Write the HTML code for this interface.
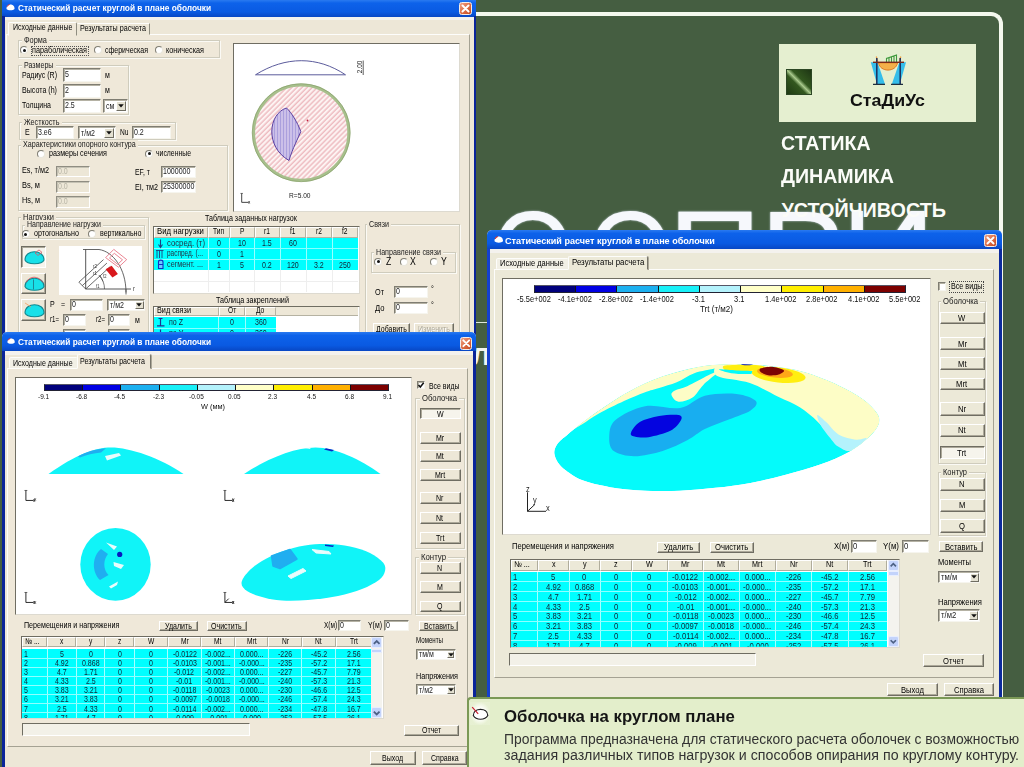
<!DOCTYPE html>
<html lang="ru"><head><meta charset="utf-8"><title>СтаДиУс</title>
<style>
html,body{margin:0;padding:0}
body{width:1024px;height:767px;overflow:hidden;background:#455e41;position:relative;font-family:"Liberation Sans",sans-serif;}
div{position:absolute;box-sizing:border-box}
svg{position:absolute;overflow:visible}
.t{position:absolute;white-space:nowrap;transform-origin:0 50%}
.win{overflow:hidden;background:var(--bg);--bg:#ece9d8;--pg:#ece9d8}
.ttl{background:linear-gradient(#2a7af0 0%,#0d62ea 18%,#0a5ae2 70%,#0847c4 100%)}
.btn{background:var(--bg);border:1px solid;border-color:#fff #6f6d62 #6f6d62 #fff;box-shadow:inset -1px -1px 0 #aca899}
.btnp{background:#f6f4ec;border:1px solid;border-color:#6f6d62 #fff #fff #6f6d62;box-shadow:inset 1px 1px 0 #aca899}
.inp{background:#fff;border:1px solid;border-color:#7f7d72 #f6f5ee #f6f5ee #7f7d72;box-shadow:inset 1px 1px 0 #b5b2a4}
.inpd{background:var(--bg);border:1px solid;border-color:#8f8d82 #fff #fff #8f8d82;box-shadow:inset 1px 1px 0 #c5c2b4}
.grp{border:1px solid #cfccbd;box-shadow:1px 1px 0 #fbfaf5, inset 1px 1px 0 #fbfaf5}
.page{background:var(--pg);border:1px solid;border-color:#fdfdfb #a5a293 #a5a293 #fdfdfb}
.cv{background:#fff;border:1px solid;border-color:#6f6d62 #dddad0 #dddad0 #6f6d62}

.rad{border-radius:50%;background:#fff;border:1px solid;border-color:#7f7d72 #e8e6dc #e8e6dc #7f7d72}
.cy{background:#00ffff}
</style></head>
<body>
<div style="left:440px;top:12px;width:563px;height:800px;border:4px solid #f4f8ee;border-left:none;border-bottom:none;border-top-right-radius:12px;"></div>
<div style="left:476px;top:321.5px;width:12px;height:1.5px;background:#dfe6da;"></div>
<span class="t" style="left:492.27px;top:182.43px;font-size:119px;line-height:142.8px;color:#f6f8fc;transform:scaleX(0.883);text-shadow:0 0 2px #d4deec;">О</span>
<span class="t" style="left:587.61px;top:182.43px;font-size:119px;line-height:142.8px;color:#f6f8fc;transform:scaleX(0.914);text-shadow:0 0 2px #d4deec;">О</span>
<span class="t" style="left:667.57px;top:181.43px;font-size:119px;line-height:142.8px;color:#f6f8fc;transform:scaleX(1.095);text-shadow:0 0 2px #d4deec;">П</span>
<span class="t" style="left:759.83px;top:182.43px;font-size:119px;line-height:142.8px;color:#f6f8fc;transform:scaleX(1.068);text-shadow:0 0 2px #d4deec;">Р</span>
<span class="t" style="left:840.98px;top:181.43px;font-size:119px;line-height:142.8px;color:#f6f8fc;transform:scaleX(1.105);text-shadow:0 0 2px #d4deec;">И</span>
<span class="t" style="left:472.6px;top:342.68px;font-size:23.5px;line-height:28.2px;color:#f2f5ee;font-weight:bold;">Л</span>
<div style="left:779px;top:43.5px;width:197px;height:78.5px;background:#e5efd0;"></div>
<div style="left:786px;top:69px;width:25.5px;height:25.5px;background:linear-gradient(45deg,#1f3a13 0%,#33581f 40%,#a9c98c 50%,#33581f 60%,#1e3614 100%);border:1px solid #2c4724;"></div>
<svg style="left:868px;top:52px" width="42" height="36" viewBox="868 52 42 36">
<path d="M870.8 62.3 L877.5 62.3 L885 84.3 L877 84.3 Z" fill="#35bdea"/>
<path d="M906 62.3 L899.3 62.3 L891.8 84.3 L899.8 84.3 Z" fill="#35bdea"/>
<path d="M878.5 62.8 C880 72.5 896 72.5 897.5 62.8 Z" fill="#f3b04a" stroke="#e07a20" stroke-width="1"/>
<path d="M886.5 62 L886.5 58.5 L896.5 55 L896.5 62 M889 62 L889 57.8 M891.5 62 L891.5 57 M894 62 L894 56" stroke="#3f9a3c" stroke-width="1.1" fill="none"/>
<path d="M876.3 56.5 L877.8 62 M900.8 56.5 L899.3 62" stroke="#f0a040" stroke-width="1.3"/>
<path d="M876.8 58 L876.8 84.3 M900.2 58 L900.2 84.3" stroke="#1c2f5c" stroke-width="1.5"/>
<path d="M873 62.3 L904 62.3" stroke="#7a2a1a" stroke-width="1.4"/>
<path d="M873 84.3 L885 84.3 M891 84.3 L903 84.3" stroke="#1f2f3f" stroke-width="1.2"/>
</svg>
<span class="t" style="left:850px;top:91.82px;font-size:15.8px;line-height:18.96px;color:#111;font-weight:bold;transform:scaleX(1.127);">СтаДиУс</span>
<span class="t" style="left:781.4px;top:131.81px;font-size:19.8px;line-height:23.76px;color:#fbfcf8;font-weight:bold;transform:scaleX(0.988);">СТАТИКА</span>
<span class="t" style="left:781.4px;top:165.11px;font-size:19.8px;line-height:23.76px;color:#fbfcf8;font-weight:bold;transform:scaleX(0.991);">ДИНАМИКА</span>
<span class="t" style="left:781.4px;top:198.81px;font-size:19.8px;line-height:23.76px;color:#fbfcf8;font-weight:bold;">УСТОЙЧИВОСТЬ</span>
<div class="win" style="left:2px;top:0px;width:474px;height:340px;--bg:#ede7d7;--pg:#efe8d9;filter:blur(0.55px);">
<div class="ttl" style="left:0px;top:0px;width:474px;height:16.5px;"></div>
<svg style="left:4px;top:4px" width="9" height="7.2" viewBox="0 0 10 8"><path d="M0.5 5.5 C0.5 1.5 3 0.5 5 0.5 C7 0.5 9.5 1.5 9.5 5.5 C8 7.5 2 7.5 0.5 5.5 Z" fill="#fff"/><path d="M1.2 3 C1.8 1.6 2.8 0.9 4 0.6" stroke="#d02020" stroke-width="1.1" fill="none"/></svg>
<span class="t" style="left:16px;top:2.9px;font-size:9px;line-height:10.8px;color:#fff;font-weight:bold;transform:scaleX(0.926);">Статический расчет круглой в плане оболочки</span>
<div style="left:457px;top:1.5px;width:13px;height:13px;background:linear-gradient(135deg,#eea388,#dc6a42 55%,#c24a22);border:1px solid #f6ece6;border-radius:2.5px;"></div>
<svg style="left:457px;top:1.5px" width="13" height="13" viewBox="0 0 12 12"><path d="M3.2 3.2 L8.8 8.8 M8.8 3.2 L3.2 8.8" stroke="#fff" stroke-width="1.8" stroke-linecap="round"/></svg>
<div style="left:0px;top:16px;width:2.5px;height:330px;background:#0a249a;"></div>
<div style="left:471.5px;top:16px;width:2.5px;height:330px;background:#0a249a;"></div>
<div style="left:2.5px;top:16.5px;width:469px;height:3.5px;background:#f4f2ee;"></div>
<div class="page" style="left:4px;top:34px;width:463.5px;height:320px;"></div>
<div style="left:6px;top:21.5px;width:69px;height:14px;background:var(--pg);border:1px solid;border-color:#fdfdfb #8f8d80 var(--pg) #fdfdfb;border-radius:2px 2px 0 0;"></div>
<div style="left:75px;top:23px;width:73px;height:11.5px;background:var(--bg);border:1px solid;border-color:#fdfdfb #8f8d80 transparent transparent;"></div>
<span class="t" style="left:11px;top:22.38px;font-size:8.7px;line-height:10.44px;color:#000;transform:scaleX(0.809);">Исходные данные</span>
<span class="t" style="left:78px;top:22.98px;font-size:8.7px;line-height:10.44px;color:#000;transform:scaleX(0.825);">Результаты расчета</span>
<div class="grp" style="left:16px;top:40px;width:202px;height:18px;"></div>
<div style="left:20px;top:35px;width:27px;height:10px;background:var(--pg);"></div>
<span class="t" style="left:22px;top:34.78px;font-size:8.7px;line-height:10.44px;color:#1a1a1a;transform:scaleX(0.848);">Форма</span>
<div class="rad" style="left:18px;top:46px;width:8px;height:8px;"></div>
<div style="left:20.5px;top:48.5px;width:3px;height:3px;background:#111;border-radius:50%;"></div>
<div style="left:28.5px;top:45.5px;width:58px;height:10.5px;border:1px dotted #555;"></div>
<span class="t" style="left:30px;top:45.38px;font-size:8.7px;line-height:10.44px;color:#000;transform:scaleX(0.833);">параболическая</span>
<div class="rad" style="left:91.5px;top:46px;width:8px;height:8px;"></div>
<span class="t" style="left:103px;top:45.38px;font-size:8.7px;line-height:10.44px;color:#000;transform:scaleX(0.807);">сферическая</span>
<div class="rad" style="left:152.5px;top:46px;width:8px;height:8px;"></div>
<span class="t" style="left:164px;top:45.38px;font-size:8.7px;line-height:10.44px;color:#000;transform:scaleX(0.832);">коническая</span>
<div class="grp" style="left:16px;top:65px;width:111px;height:50px;"></div>
<div style="left:20px;top:60px;width:33.5px;height:10px;background:var(--pg);"></div>
<span class="t" style="left:22px;top:59.78px;font-size:8.7px;line-height:10.44px;color:#1a1a1a;transform:scaleX(0.816);">Размеры</span>
<span class="t" style="left:20px;top:69.78px;font-size:8.7px;line-height:10.44px;color:#000;transform:scaleX(0.807);">Радиус (R)</span>
<div class="inp" style="left:61px;top:68px;width:38px;height:14px;"></div>
<span class="t" style="left:63px;top:69.48px;font-size:8.7px;line-height:10.44px;color:#222;transform:scaleX(0.810);">5</span>
<span class="t" style="left:103px;top:70.28px;font-size:8.7px;line-height:10.44px;color:#000;transform:scaleX(0.810);">м</span>
<span class="t" style="left:20px;top:84.78px;font-size:8.7px;line-height:10.44px;color:#000;transform:scaleX(0.815);">Высота (h)</span>
<div class="inp" style="left:61px;top:84px;width:38px;height:14px;"></div>
<span class="t" style="left:63px;top:85.48px;font-size:8.7px;line-height:10.44px;color:#222;transform:scaleX(0.810);">2</span>
<span class="t" style="left:103px;top:85.28px;font-size:8.7px;line-height:10.44px;color:#000;transform:scaleX(0.810);">м</span>
<span class="t" style="left:20px;top:99.78px;font-size:8.7px;line-height:10.44px;color:#000;transform:scaleX(0.805);">Толщина</span>
<div class="inp" style="left:61px;top:99px;width:38px;height:13.5px;"></div>
<span class="t" style="left:63px;top:100.23px;font-size:8.7px;line-height:10.44px;color:#222;transform:scaleX(0.810);">2.5</span>
<div class="inp" style="left:101px;top:99px;width:24.5px;height:13.5px;"></div>
<span class="t" style="left:104px;top:100.83px;font-size:8.7px;line-height:10.44px;color:#222;transform:scaleX(0.810);">см</span>
<div style="left:113.5px;top:100.5px;width:10.5px;height:10.5px;background:#e4e1d2;border:1px solid;border-color:#fff #6f6d62 #6f6d62 #fff;"></div>
<svg style="left:114.75px;top:103.15px" width="8" height="6" viewBox="0 0 8 6"><path d="M1.2 1.3 L6.8 1.3 L4 4.6 Z" fill="#111"/></svg>
<div class="grp" style="left:17px;top:122px;width:157px;height:18px;"></div>
<div style="left:20px;top:117px;width:39.5px;height:10px;background:var(--pg);"></div>
<span class="t" style="left:22px;top:116.78px;font-size:8.7px;line-height:10.44px;color:#1a1a1a;transform:scaleX(0.831);">Жесткость</span>
<span class="t" style="left:23px;top:127.28px;font-size:8.7px;line-height:10.44px;color:#000;transform:scaleX(0.810);">E</span>
<div class="inp" style="left:34px;top:126px;width:38px;height:13px;"></div>
<span class="t" style="left:36px;top:126.98px;font-size:8.7px;line-height:10.44px;color:#222;transform:scaleX(0.810);">3.e6</span>
<div class="inp" style="left:76px;top:126px;width:37.5px;height:13px;"></div>
<span class="t" style="left:79px;top:127.58px;font-size:8.7px;line-height:10.44px;color:#222;transform:scaleX(0.810);">т/м2</span>
<div style="left:102px;top:127.5px;width:10px;height:10px;background:#e4e1d2;border:1px solid;border-color:#fff #6f6d62 #6f6d62 #fff;"></div>
<svg style="left:103px;top:129.9px" width="8" height="6" viewBox="0 0 8 6"><path d="M1.2 1.3 L6.8 1.3 L4 4.6 Z" fill="#111"/></svg>
<span class="t" style="left:118px;top:127.28px;font-size:8.7px;line-height:10.44px;color:#000;transform:scaleX(0.764);">Nu</span>
<div class="inp" style="left:130px;top:126px;width:39px;height:13px;"></div>
<span class="t" style="left:132px;top:126.98px;font-size:8.7px;line-height:10.44px;color:#222;transform:scaleX(0.810);">0.2</span>
<div class="grp" style="left:15.5px;top:144.5px;width:210px;height:66.5px;"></div>
<div style="left:19px;top:139.5px;width:117px;height:10px;background:var(--pg);"></div>
<span class="t" style="left:21px;top:139.28px;font-size:8.7px;line-height:10.44px;color:#1a1a1a;transform:scaleX(0.821);">Характеристики опорного контура</span>
<div class="rad" style="left:35px;top:149.5px;width:8px;height:8px;"></div>
<span class="t" style="left:47px;top:147.78px;font-size:8.7px;line-height:10.44px;color:#000;transform:scaleX(0.822);">размеры сечения</span>
<div class="rad" style="left:143px;top:149.5px;width:8px;height:8px;"></div>
<div style="left:145.5px;top:152px;width:3px;height:3px;background:#111;border-radius:50%;"></div>
<span class="t" style="left:154px;top:147.78px;font-size:8.7px;line-height:10.44px;color:#000;transform:scaleX(0.789);">численные</span>
<span class="t" style="left:20px;top:164.78px;font-size:8.7px;line-height:10.44px;color:#000;transform:scaleX(0.838);">Es, т/м2</span>
<div class="inpd" style="left:54px;top:165.5px;width:34px;height:11.5px;"></div>
<span class="t" style="left:56px;top:165.73px;font-size:8.7px;line-height:10.44px;color:#b8b5a6;transform:scaleX(0.810);">0.0</span>
<span class="t" style="left:20px;top:179.78px;font-size:8.7px;line-height:10.44px;color:#000;transform:scaleX(0.858);">Bs, м</span>
<div class="inpd" style="left:54px;top:180.5px;width:34px;height:12px;"></div>
<span class="t" style="left:56px;top:180.98px;font-size:8.7px;line-height:10.44px;color:#b8b5a6;transform:scaleX(0.810);">0.0</span>
<span class="t" style="left:20px;top:194.78px;font-size:8.7px;line-height:10.44px;color:#000;transform:scaleX(0.839);">Hs, м</span>
<div class="inpd" style="left:54px;top:196px;width:34px;height:12px;"></div>
<span class="t" style="left:56px;top:196.48px;font-size:8.7px;line-height:10.44px;color:#b8b5a6;transform:scaleX(0.810);">0.0</span>
<span class="t" style="left:133px;top:166.78px;font-size:8.7px;line-height:10.44px;color:#000;transform:scaleX(0.791);">EF, т</span>
<div class="inp" style="left:159px;top:166px;width:35px;height:11.5px;"></div>
<span class="t" style="left:161px;top:166.23px;font-size:8.7px;line-height:10.44px;color:#222;transform:scaleX(0.810);">1000000</span>
<span class="t" style="left:133px;top:181.78px;font-size:8.7px;line-height:10.44px;color:#000;transform:scaleX(0.826);">EI, тм2</span>
<div class="inp" style="left:159px;top:181px;width:35px;height:11.5px;"></div>
<span class="t" style="left:161px;top:181.23px;font-size:8.7px;line-height:10.44px;color:#222;transform:scaleX(0.810);">25300000</span>
<div class="cv" style="left:230.5px;top:42.5px;width:227.5px;height:169px;"></div>
<svg style="left:230.5px;top:42.5px" width="227" height="169" viewBox="232.5 42.5 227 169">
<defs>
<pattern id="hp" width="3.6" height="3.6" patternUnits="userSpaceOnUse" patternTransform="rotate(-45)"><rect width="3.6" height="3.6" fill="#fdf3f2"/><line x1="0" y1="1" x2="3.6" y2="1" stroke="#e59aa2" stroke-width="0.9"/></pattern>
<pattern id="vp" width="3" height="3" patternUnits="userSpaceOnUse"><rect width="3" height="3" fill="#ece0f4"/><line x1="1" y1="0" x2="1" y2="3" stroke="#5a4fc0" stroke-width="0.9"/></pattern>
</defs>
<path d="M255 74.3 C285 55.5 317 55.5 345 74.3 Z" fill="none" stroke="#5c5c9c" stroke-width="1"/>
<path d="M362.7 60 L362.7 74.5" stroke="#333" stroke-width="0.8"/>
<circle cx="300.7" cy="132.2" r="47.6" fill="url(#hp)" stroke="#a7bf8c" stroke-width="3"/>
<circle cx="300.7" cy="132.2" r="49" fill="none" stroke="#7f9a62" stroke-width="0.6"/>
<path d="M286 107.5 C268 113 264 146 288.5 160 C292 148 298 137 300.3 131 C297 122 291 112 286 107.5 Z" fill="url(#vp)" stroke="#5a3fa0" stroke-width="1"/>
<circle cx="307" cy="120" r="0.9" fill="#c02040"/>
</svg>
<span class="t" style="left:357.5px;top:63.4px;font-size:6.5px;line-height:7.8px;color:#222;transform:scaleX(0.810);transform-origin:50% 50%;transform:translate(-50%,0) rotate(-90deg);">2.00</span>
<span class="t" style="left:287px;top:192.1px;font-size:6.5px;line-height:7.8px;color:#222;transform:scaleX(1.017);">R=5.00</span>
<svg style="left:238px;top:193px" width="10.2" height="11.05" viewBox="0 0 12 13"><path d="M2 0.5 L2 11 L10 11 " stroke="#222" stroke-width="1" fill="none"/><path d="M0.5 0.5 L3.5 0.5 M10 9.5 L11.5 12.5 M11.5 9.5 L10 12.5" stroke="#222" stroke-width="0.7" fill="none"/></svg>
<div class="grp" style="left:15.5px;top:217px;width:131.5px;height:128px;"></div>
<div style="left:19px;top:212px;width:35px;height:10px;background:var(--pg);"></div>
<span class="t" style="left:21px;top:211.78px;font-size:8.7px;line-height:10.44px;color:#1a1a1a;transform:scaleX(0.860);">Нагрузки</span>
<div class="grp" style="left:20px;top:224.5px;width:123px;height:14.5px;"></div>
<div style="left:23px;top:219.5px;width:78px;height:10px;background:var(--pg);"></div>
<span class="t" style="left:25px;top:219.28px;font-size:8.7px;line-height:10.44px;color:#1a1a1a;transform:scaleX(0.810);">Направление нагрузки</span>
<div class="rad" style="left:19.5px;top:230px;width:8px;height:8px;"></div>
<div style="left:22px;top:232.5px;width:3px;height:3px;background:#111;border-radius:50%;"></div>
<span class="t" style="left:32px;top:228.28px;font-size:8.7px;line-height:10.44px;color:#000;transform:scaleX(0.819);">ортогонально</span>
<div class="rad" style="left:85.5px;top:230px;width:8px;height:8px;"></div>
<span class="t" style="left:97.5px;top:228.28px;font-size:8.7px;line-height:10.44px;color:#000;transform:scaleX(0.815);">вертикально</span>
<div class="btnp" style="left:19px;top:246px;width:24.5px;height:21.5px;"></div>
<svg style="left:0;top:0" width="160" height="340" viewBox="2 0 160 340"><path d="M25 259.95 C25 248.95 44 248.95 44 259.95 C42 264.95 27 264.95 25 259.95 Z" fill="#18e0e8" stroke="#108890" stroke-width="1.1"/><path d="M35 252.95 l4 -3 l3 2.5 l-4 3 z" fill="none" stroke="#e05060" stroke-width="0.8"/></svg>
<div class="btn" style="left:19px;top:272.5px;width:24.5px;height:21.5px;"></div>
<svg style="left:0;top:0" width="160" height="340" viewBox="2 0 160 340"><path d="M25 286.45 C25 275.45 44 275.45 44 286.45 C42 291.45 27 291.45 25 286.45 Z" fill="#18e0e8" stroke="#108890" stroke-width="1.1"/><path d="M26 282.45 C30 275.45 38 275.45 43 282.45" fill="none" stroke="#e05060" stroke-width="0.8"/><path d="M33.5 279.45 L33.5 289.45" stroke="#207080" stroke-width="0.8"/></svg>
<div class="btn" style="left:19px;top:299px;width:24.5px;height:21.5px;"></div>
<svg style="left:0;top:0" width="160" height="340" viewBox="2 0 160 340"><path d="M25 312.95 C25 301.95 44 301.95 44 312.95 C42 317.95 27 317.95 25 312.95 Z" fill="#18e0e8" stroke="#108890" stroke-width="1.1"/><path d="M25 302.95 l6 4" stroke="#f0a060" stroke-width="0.8"/></svg>
<div style="left:57px;top:245.5px;width:83px;height:49px;background:#fff;"></div>
<svg style="left:57px;top:245.5px" width="83" height="49" viewBox="59 245.5 83 49">
<path d="M83 249 L99 249 C113 251 126 268 126 292" fill="none" stroke="#555" stroke-width="0.9"/>
<path d="M85.7 249 L85.7 288.5 L131 288.5" fill="none" stroke="#444" stroke-width="0.9"/>
<path d="M85.7 288.5 L110.3 266 M82.3 285.1 L106.9 262.6 M78.9 281.7 L103.5 259.1 M78.9 281.7 L85.7 288.5" fill="none" stroke="#444" stroke-width="0.8"/>
<path d="M105.6 268.7 L111.7 265.3 L117.9 273.5 L112.4 276.9 Z" fill="#d8181c"/>
<path d="M105.6 257.1 L113.8 248.9 L126.7 259.1 L118.5 266.7 Z M109.5 257.5 L114.3 252.8 L122.5 259.3 L117.7 263.8 Z" fill="none" stroke="#e87888" stroke-width="0.9"/>
<path d="M126 288.5 L126 294" stroke="#555" stroke-width="0.9"/>
<path d="M99.5 274.5 A19 19 0 0 1 103 281" fill="none" stroke="#444" stroke-width="0.7"/>
<path d="M104.5 288.5 A19 19 0 0 0 99 275" fill="none" stroke="#444" stroke-width="0.7"/>
</svg>
<span class="t" style="left:130.5px;top:285.3px;font-size:7px;line-height:8.4px;color:#333;transform:scaleX(0.810);">r</span>
<span class="t" style="left:90.5px;top:262.7px;font-size:5.5px;line-height:6.6px;color:#333;transform:scaleX(0.810);">r2</span>
<span class="t" style="left:90.5px;top:270.2px;font-size:5.5px;line-height:6.6px;color:#333;transform:scaleX(0.810);">r1</span>
<span class="t" style="left:94px;top:283.3px;font-size:5px;line-height:6px;color:#333;transform:scaleX(0.810);">f1</span>
<span class="t" style="left:101px;top:273px;font-size:5px;line-height:6px;color:#333;transform:scaleX(0.810);">f2</span>
<span class="t" style="left:48px;top:298.78px;font-size:8.7px;line-height:10.44px;color:#000;transform:scaleX(0.810);">P</span>
<span class="t" style="left:59px;top:298.78px;font-size:8.7px;line-height:10.44px;color:#000;transform:scaleX(0.810);">=</span>
<div class="inp" style="left:68px;top:299px;width:32.5px;height:11.5px;"></div>
<span class="t" style="left:70px;top:299.23px;font-size:8.7px;line-height:10.44px;color:#222;transform:scaleX(0.810);">0</span>
<div class="inp" style="left:105px;top:299px;width:38px;height:11.5px;"></div>
<span class="t" style="left:108px;top:299.83px;font-size:8.7px;line-height:10.44px;color:#222;transform:scaleX(0.810);">т/м2</span>
<div style="left:133px;top:300.5px;width:8.5px;height:8.5px;background:#e4e1d2;border:1px solid;border-color:#fff #6f6d62 #6f6d62 #fff;"></div>
<svg style="left:133.25px;top:302.15px" width="8" height="6" viewBox="0 0 8 6"><path d="M1.2 1.3 L6.8 1.3 L4 4.6 Z" fill="#111"/></svg>
<span class="t" style="left:48px;top:314.28px;font-size:8.7px;line-height:10.44px;color:#000;transform:scaleX(0.702);">r1=</span>
<div class="inp" style="left:60.5px;top:314px;width:23.5px;height:11.5px;"></div>
<span class="t" style="left:62.5px;top:314.23px;font-size:8.7px;line-height:10.44px;color:#222;transform:scaleX(0.810);">0</span>
<span class="t" style="left:94px;top:314.28px;font-size:8.7px;line-height:10.44px;color:#000;transform:scaleX(0.702);">r2=</span>
<div class="inp" style="left:106px;top:314px;width:22px;height:11.5px;"></div>
<span class="t" style="left:108px;top:314.23px;font-size:8.7px;line-height:10.44px;color:#222;transform:scaleX(0.810);">0</span>
<span class="t" style="left:133px;top:314.78px;font-size:8.7px;line-height:10.44px;color:#000;transform:scaleX(0.810);">м</span>
<div class="inp" style="left:60.5px;top:329px;width:23.5px;height:12px;"></div>
<div class="inp" style="left:106px;top:329px;width:22px;height:12px;"></div>
<span class="t" style="left:203px;top:212.78px;font-size:8.7px;line-height:10.44px;color:#000;transform:scaleX(0.819);">Таблица заданных нагрузок</span>
<div class="cv" style="left:150.5px;top:226px;width:207px;height:67.5px;"></div>
<div style="left:151.5px;top:227px;width:54.5px;height:10.5px;background:var(--bg);border:1px solid;border-color:#fff #b5b2a2 #b5b2a2 #fff;"></div>
<span class="t" style="left:154.5px;top:227.38px;font-size:8.2px;line-height:9.84px;color:#000;transform:scaleX(0.946);">Вид нагрузки</span>
<div style="left:206px;top:227px;width:21.5px;height:10.5px;background:var(--bg);border:1px solid;border-color:#fff #b5b2a2 #b5b2a2 #fff;"></div>
<span class="t" style="left:211.21px;top:227.38px;font-size:8.2px;line-height:9.84px;color:#000;transform:scaleX(0.810);">Тип</span>
<div style="left:227.5px;top:227px;width:25px;height:10.5px;background:var(--bg);border:1px solid;border-color:#fff #b5b2a2 #b5b2a2 #fff;"></div>
<span class="t" style="left:237.78px;top:227.38px;font-size:8.2px;line-height:9.84px;color:#000;transform:scaleX(0.810);">P</span>
<div style="left:252.5px;top:227px;width:25.5px;height:10.5px;background:var(--bg);border:1px solid;border-color:#fff #b5b2a2 #b5b2a2 #fff;"></div>
<span class="t" style="left:262.3px;top:227.38px;font-size:8.2px;line-height:9.84px;color:#000;transform:scaleX(0.810);">r1</span>
<div style="left:278px;top:227px;width:26px;height:10.5px;background:var(--bg);border:1px solid;border-color:#fff #b5b2a2 #b5b2a2 #fff;"></div>
<span class="t" style="left:288.23px;top:227.38px;font-size:8.2px;line-height:9.84px;color:#000;transform:scaleX(0.810);">f1</span>
<div style="left:304px;top:227px;width:26px;height:10.5px;background:var(--bg);border:1px solid;border-color:#fff #b5b2a2 #b5b2a2 #fff;"></div>
<span class="t" style="left:314.05px;top:227.38px;font-size:8.2px;line-height:9.84px;color:#000;transform:scaleX(0.810);">r2</span>
<div style="left:330px;top:227px;width:25.5px;height:10.5px;background:var(--bg);border:1px solid;border-color:#fff #b5b2a2 #b5b2a2 #fff;"></div>
<span class="t" style="left:339.98px;top:227.38px;font-size:8.2px;line-height:9.84px;color:#000;transform:scaleX(0.810);">f2</span>
<div style="left:151.5px;top:238px;width:204px;height:32.3px;background:#00ffff;"></div>
<div style="left:205.5px;top:238px;width:1px;height:32.3px;background:#9ff;"></div>
<div style="left:205.5px;top:270.3px;width:1px;height:22.2px;background:#eee;"></div>
<div style="left:227px;top:238px;width:1px;height:32.3px;background:#9ff;"></div>
<div style="left:227px;top:270.3px;width:1px;height:22.2px;background:#eee;"></div>
<div style="left:252px;top:238px;width:1px;height:32.3px;background:#9ff;"></div>
<div style="left:252px;top:270.3px;width:1px;height:22.2px;background:#eee;"></div>
<div style="left:277.5px;top:238px;width:1px;height:32.3px;background:#9ff;"></div>
<div style="left:277.5px;top:270.3px;width:1px;height:22.2px;background:#eee;"></div>
<div style="left:303.5px;top:238px;width:1px;height:32.3px;background:#9ff;"></div>
<div style="left:303.5px;top:270.3px;width:1px;height:22.2px;background:#eee;"></div>
<div style="left:329.5px;top:238px;width:1px;height:32.3px;background:#9ff;"></div>
<div style="left:329.5px;top:270.3px;width:1px;height:22.2px;background:#eee;"></div>
<div style="left:151.5px;top:248.3px;width:204px;height:0.8px;background:#8ff;"></div>
<div style="left:151.5px;top:259.1px;width:204px;height:0.8px;background:#8ff;"></div>
<div style="left:151.5px;top:281px;width:204px;height:0.8px;background:#eee;"></div>
<span class="t" style="left:165px;top:238.68px;font-size:8.2px;line-height:9.84px;color:#234;transform:scaleX(0.942);">сосред. (т)</span>
<span class="t" style="left:214.79px;top:238.38px;font-size:8.7px;line-height:10.44px;color:#123;transform:scaleX(0.810);">0</span>
<span class="t" style="left:236.08px;top:238.38px;font-size:8.7px;line-height:10.44px;color:#123;transform:scaleX(0.810);">10</span>
<span class="t" style="left:260.35px;top:238.38px;font-size:8.7px;line-height:10.44px;color:#123;transform:scaleX(0.810);">1.5</span>
<span class="t" style="left:287.08px;top:238.38px;font-size:8.7px;line-height:10.44px;color:#123;transform:scaleX(0.810);">60</span>
<span class="t" style="left:165px;top:249.38px;font-size:8.2px;line-height:9.84px;color:#234;transform:scaleX(0.791);">распред. (...</span>
<span class="t" style="left:214.79px;top:249.08px;font-size:8.7px;line-height:10.44px;color:#123;transform:scaleX(0.810);">0</span>
<span class="t" style="left:238.04px;top:249.08px;font-size:8.7px;line-height:10.44px;color:#123;transform:scaleX(0.810);">1</span>
<span class="t" style="left:165px;top:260.08px;font-size:8.2px;line-height:9.84px;color:#234;transform:scaleX(0.886);">сегмент. ...</span>
<span class="t" style="left:214.79px;top:259.78px;font-size:8.7px;line-height:10.44px;color:#123;transform:scaleX(0.810);">1</span>
<span class="t" style="left:238.04px;top:259.78px;font-size:8.7px;line-height:10.44px;color:#123;transform:scaleX(0.810);">5</span>
<span class="t" style="left:260.35px;top:259.78px;font-size:8.7px;line-height:10.44px;color:#123;transform:scaleX(0.810);">0.2</span>
<span class="t" style="left:285.12px;top:259.78px;font-size:8.7px;line-height:10.44px;color:#123;transform:scaleX(0.810);">120</span>
<span class="t" style="left:312.1px;top:259.78px;font-size:8.7px;line-height:10.44px;color:#123;transform:scaleX(0.810);">3.2</span>
<span class="t" style="left:336.87px;top:259.78px;font-size:8.7px;line-height:10.44px;color:#123;transform:scaleX(0.810);">250</span>
<svg style="left:0;top:0" width="400" height="340" viewBox="2 0 400 340"><path d="M160.5 239.5 L160.5 247 M158.5 244.5 L160.5 247.5 L162.5 244.5" stroke="#204080" stroke-width="1.1" fill="none"/><path d="M157 250.5 L157 258 M159.5 250.5 L159.5 258 M162 250.5 L162 258 M156 250.5 L163.5 250.5" stroke="#204080" stroke-width="0.9" fill="none"/><path d="M158.5 262 C158.5 259.5 163 259.5 163 262 L163 268.5 L158.5 268.5 Z M158.5 264.5 L163 264.5" stroke="#1030c0" stroke-width="1.1" fill="#6cf"/></svg>
<span class="t" style="left:214px;top:294.78px;font-size:8.7px;line-height:10.44px;color:#000;transform:scaleX(0.830);">Таблица закреплений</span>
<div class="cv" style="left:150.5px;top:305.5px;width:207px;height:40px;"></div>
<div style="left:151.5px;top:306.5px;width:65px;height:9.5px;background:var(--bg);border:1px solid;border-color:#fff #b5b2a2 #b5b2a2 #fff;"></div>
<span class="t" style="left:154.5px;top:306.38px;font-size:8.2px;line-height:9.84px;color:#000;transform:scaleX(0.889);">Вид связи</span>
<div style="left:216.5px;top:306.5px;width:26.5px;height:9.5px;background:var(--bg);border:1px solid;border-color:#fff #b5b2a2 #b5b2a2 #fff;"></div>
<span class="t" style="left:225.65px;top:306.38px;font-size:8.2px;line-height:9.84px;color:#000;transform:scaleX(0.810);">От</span>
<div style="left:243px;top:306.5px;width:31px;height:9.5px;background:var(--bg);border:1px solid;border-color:#fff #b5b2a2 #b5b2a2 #fff;"></div>
<span class="t" style="left:254.37px;top:306.38px;font-size:8.2px;line-height:9.84px;color:#000;transform:scaleX(0.810);">До</span>
<div style="left:274px;top:306.5px;width:82px;height:9.5px;background:var(--bg);border-bottom:1px solid #b5b2a2;"></div>
<div style="left:151.5px;top:316.5px;width:122.5px;height:30px;background:#00ffff;"></div>
<div style="left:216px;top:316.5px;width:1px;height:30px;background:#9ff;"></div>
<div style="left:242.5px;top:316.5px;width:1px;height:30px;background:#9ff;"></div>
<div style="left:151.5px;top:328px;width:122.5px;height:0.8px;background:#8ff;"></div>
<span class="t" style="left:167px;top:317.48px;font-size:8.7px;line-height:10.44px;color:#123;transform:scaleX(0.810);">по Z</span>
<span class="t" style="left:227.74px;top:317.48px;font-size:8.7px;line-height:10.44px;color:#123;transform:scaleX(0.810);">0</span>
<span class="t" style="left:252.62px;top:317.48px;font-size:8.7px;line-height:10.44px;color:#123;transform:scaleX(0.810);">360</span>
<span class="t" style="left:167px;top:328.28px;font-size:8.7px;line-height:10.44px;color:#123;transform:scaleX(0.810);">по Y</span>
<span class="t" style="left:227.74px;top:328.28px;font-size:8.7px;line-height:10.44px;color:#123;transform:scaleX(0.810);">0</span>
<span class="t" style="left:252.62px;top:328.28px;font-size:8.7px;line-height:10.44px;color:#123;transform:scaleX(0.810);">360</span>
<svg style="left:0;top:0" width="400" height="340" viewBox="2 0 400 340"><path d="M160.5 318 L160.5 325.5 M157 325.8 L164.5 325.8 M158.5 318.5 L162.5 318.5" stroke="#203090" stroke-width="1.2" fill="none"/><path d="M160.5 329.5 L160.5 337" stroke="#203090" stroke-width="1.2" fill="none"/></svg>
<div class="grp" style="left:362.5px;top:224px;width:95.5px;height:121px;"></div>
<div style="left:365px;top:219px;width:24px;height:10px;background:var(--pg);"></div>
<span class="t" style="left:367px;top:218.78px;font-size:8.7px;line-height:10.44px;color:#1a1a1a;transform:scaleX(0.821);">Связи</span>
<div class="grp" style="left:369px;top:252px;width:84.5px;height:20.5px;"></div>
<div style="left:372px;top:247px;width:69px;height:10px;background:var(--pg);"></div>
<span class="t" style="left:374px;top:246.78px;font-size:8.7px;line-height:10.44px;color:#1a1a1a;transform:scaleX(0.821);">Направление связи</span>
<div class="rad" style="left:372px;top:257.5px;width:8px;height:8px;"></div>
<div style="left:374.5px;top:260px;width:3px;height:3px;background:#111;border-radius:50%;"></div>
<span class="t" style="left:384px;top:254.88px;font-size:10.7px;line-height:12.84px;color:#000;transform:scaleX(0.810);">Z</span>
<div class="rad" style="left:398px;top:257.5px;width:8px;height:8px;"></div>
<span class="t" style="left:408px;top:254.88px;font-size:10.7px;line-height:12.84px;color:#000;transform:scaleX(0.810);">X</span>
<div class="rad" style="left:428px;top:257.5px;width:8px;height:8px;"></div>
<span class="t" style="left:439px;top:254.88px;font-size:10.7px;line-height:12.84px;color:#000;transform:scaleX(0.810);">Y</span>
<span class="t" style="left:373px;top:286.78px;font-size:8.7px;line-height:10.44px;color:#000;transform:scaleX(0.837);">От</span>
<div class="inp" style="left:392px;top:285.5px;width:33.5px;height:12px;"></div>
<span class="t" style="left:394px;top:285.98px;font-size:8.7px;line-height:10.44px;color:#222;transform:scaleX(0.810);">0</span>
<span class="t" style="left:429px;top:283.78px;font-size:8.7px;line-height:10.44px;color:#000;transform:scaleX(0.810);">°</span>
<span class="t" style="left:373px;top:302.78px;font-size:8.7px;line-height:10.44px;color:#000;transform:scaleX(0.877);">До</span>
<div class="inp" style="left:392px;top:302px;width:33.5px;height:12px;"></div>
<span class="t" style="left:394px;top:302.48px;font-size:8.7px;line-height:10.44px;color:#222;transform:scaleX(0.810);">0</span>
<span class="t" style="left:429px;top:299.78px;font-size:8.7px;line-height:10.44px;color:#000;transform:scaleX(0.810);">°</span>
<div class="btn" style="left:371px;top:322.5px;width:36.5px;height:13.5px;"></div>
<span class="t" style="left:373.75px;top:324.33px;font-size:8.7px;line-height:10.44px;color:#000;transform:scaleX(0.806);">Добавить</span>
<div class="btn" style="left:412px;top:322.5px;width:40px;height:13.5px;"></div>
<span class="t" style="left:416px;top:324.33px;font-size:8.7px;line-height:10.44px;color:#aca899;transform:scaleX(0.815);text-shadow:1px 1px 0 #fff;">Изменить</span>
</div>
<div class="win" style="left:2px;top:332px;width:474px;height:435px;--bg:#ede7d7;--pg:#efe8d9;border-radius:5px 5px 0 0;filter:blur(0.55px);">
<div class="ttl" style="left:0px;top:0px;width:474px;height:19px;border-radius:4px 4px 0 0;"></div>
<svg style="left:4.5px;top:6.3px" width="8.2" height="6.56" viewBox="0 0 10 8"><path d="M0.5 5.5 C0.5 1.5 3 0.5 5 0.5 C7 0.5 9.5 1.5 9.5 5.5 C8 7.5 2 7.5 0.5 5.5 Z" fill="#fff"/><path d="M1.2 3 C1.8 1.6 2.8 0.9 4 0.6" stroke="#d02020" stroke-width="1.1" fill="none"/></svg>
<span class="t" style="left:16px;top:4.9px;font-size:9px;line-height:10.8px;color:#fff;font-weight:bold;transform:scaleX(0.926);">Статический расчет круглой в плане оболочки</span>
<div style="left:457.5px;top:5px;width:12.5px;height:12.5px;background:linear-gradient(135deg,#eea388,#dc6a42 55%,#c24a22);border:1px solid #f6ece6;border-radius:2.5px;"></div>
<svg style="left:457.5px;top:5px" width="12.5" height="12.5" viewBox="0 0 12 12"><path d="M3.2 3.2 L8.8 8.8 M8.8 3.2 L3.2 8.8" stroke="#fff" stroke-width="1.8" stroke-linecap="round"/></svg>
<div style="left:0px;top:19px;width:3px;height:424px;background:#0a249a;"></div>
<div style="left:471px;top:19px;width:3px;height:424px;background:#0a249a;"></div>
<div style="left:3px;top:19px;width:468px;height:3.5px;background:#f4f2ee;"></div>
<div style="left:0px;top:440px;width:474px;height:3px;background:#0a249a;"></div>
<div class="page" style="left:5px;top:36px;width:460.5px;height:378.8px;"></div>
<div style="left:7px;top:25px;width:68px;height:11px;background:#f2f0e6;border:1px solid;border-color:#fdfdfb transparent transparent #fdfdfb;border-radius:2px 0 0 0;"></div>
<div style="left:75px;top:22px;width:74px;height:15px;background:var(--pg);border:1px solid;border-color:#fdfdfb #77756a var(--pg) #fdfdfb;border-radius:2px 2px 0 0;box-shadow:1px 0 0 #aca899;"></div>
<span class="t" style="left:11px;top:26.38px;font-size:8.7px;line-height:10.44px;color:#000;transform:scaleX(0.812);">Исходные данные</span>
<span class="t" style="left:78px;top:24.38px;font-size:8.7px;line-height:10.44px;color:#000;transform:scaleX(0.813);">Результаты расчета</span>
<div class="cv" style="left:13px;top:45px;width:397px;height:238px;"></div>
<div style="left:42px;top:52px;width:38.52px;height:7px;background:#00007c;border-left:1px solid #111;"></div>
<div style="left:80.22px;top:52px;width:38.52px;height:7px;background:#0000e4;border-left:1px solid #111;"></div>
<div style="left:118.44px;top:52px;width:38.52px;height:7px;background:#1cb0f0;border-left:1px solid #111;"></div>
<div style="left:156.67px;top:52px;width:38.52px;height:7px;background:#18f0f8;border-left:1px solid #111;"></div>
<div style="left:194.89px;top:52px;width:38.52px;height:7px;background:#b4f2fc;border-left:1px solid #111;"></div>
<div style="left:233.11px;top:52px;width:38.52px;height:7px;background:#ffffc8;border-left:1px solid #111;"></div>
<div style="left:271.33px;top:52px;width:38.52px;height:7px;background:#ffee00;border-left:1px solid #111;"></div>
<div style="left:309.56px;top:52px;width:38.52px;height:7px;background:#ffb000;border-left:1px solid #111;"></div>
<div style="left:347.78px;top:52px;width:38.52px;height:7px;background:#7c0000;border-left:1px solid #111;"></div>
<div style="left:42px;top:52px;width:344.5px;height:7px;border:1px solid #223;border-top-color:#556;"></div>
<span class="t" style="left:35.92px;top:60px;font-size:8px;line-height:9.6px;color:#111;transform:scaleX(0.810);">-9.1</span>
<span class="t" style="left:74.14px;top:60px;font-size:8px;line-height:9.6px;color:#111;transform:scaleX(0.810);">-6.8</span>
<span class="t" style="left:112.36px;top:60px;font-size:8px;line-height:9.6px;color:#111;transform:scaleX(0.810);">-4.5</span>
<span class="t" style="left:150.58px;top:60px;font-size:8px;line-height:9.6px;color:#111;transform:scaleX(0.810);">-2.3</span>
<span class="t" style="left:187px;top:60px;font-size:8px;line-height:9.6px;color:#111;transform:scaleX(0.810);">-0.05</span>
<span class="t" style="left:226.31px;top:60px;font-size:8px;line-height:9.6px;color:#111;transform:scaleX(0.810);">0.05</span>
<span class="t" style="left:266.33px;top:60px;font-size:8px;line-height:9.6px;color:#111;transform:scaleX(0.810);">2.3</span>
<span class="t" style="left:304.55px;top:60px;font-size:8px;line-height:9.6px;color:#111;transform:scaleX(0.810);">4.5</span>
<span class="t" style="left:342.77px;top:60px;font-size:8px;line-height:9.6px;color:#111;transform:scaleX(0.810);">6.8</span>
<span class="t" style="left:381px;top:60px;font-size:8px;line-height:9.6px;color:#111;transform:scaleX(0.810);">9.1</span>
<span class="t" style="left:198.5px;top:69.7px;font-size:8px;line-height:9.6px;color:#111;transform:scaleX(0.919);">W (мм)</span>
<svg style="left:13px;top:45px" width="397" height="238" viewBox="15 377 397 238"><path d="M48.5 474 C75 455 95 447.5 111 447.5 C130 447.5 160 458 183.5 474 Z" fill="#10f4f8"/><path d="M78 456.5 C86 451.5 96 449 106 448.2 L101 452.5 C94 453 86 455 80 457.5 Z" fill="#20aef0"/><path d="M105 456 L119 453 L121 455.5 L107 460.5 Z" fill="#e8fcfc"/><path d="M244 474 C268 458 295 447.5 315.5 447.5 C335 447.5 360 459 380.5 474 Z" fill="#10f4f8"/><path d="M326 448.2 L334 450 L332 451.5 L324 449.5 Z" fill="#0828c8"/><path d="M305 448 L311 447.5 L310 449 Z" fill="#e8fcfc"/><ellipse cx="115.5" cy="564.4" rx="35.2" ry="36.3" fill="#10f4f8"/><path d="M101 549 C92 556 91.5 572 100 580 L108.5 575 C103 569.5 103 560 108 554 Z" fill="#20aef0"/><circle cx="119.7" cy="554.4" r="2.6" fill="#0818c0"/><path d="M106 542.5 L117 546.5 L114 550 Z M113.5 562 L124 565 L121 569 L114 566 Z M109 586.5 L118 581.5 L117 585 L111 588.5 Z" fill="#e8fcfc"/><path d="M241.5 583 C241.67 579.83 244.58 575.67 248 572 C251.42 568.33 256.33 564.42 262 561 C267.67 557.58 274.83 554.08 282 551.5 C289.17 548.92 297.33 546.75 305 545.5 C312.67 544.25 320.5 543.83 328 544 C335.5 544.17 343 545 350 546.5 C357 548 364.5 550.33 370 553 C375.5 555.67 380.5 559.5 383 562.5 C385.5 565.5 385.67 568.08 385 571 C384.33 573.92 382.83 577 379 580 C375.17 583 368.83 586.33 362 589 C355.17 591.67 347 594.17 338 596 C329 597.83 317.33 599.25 308 600 C298.67 600.75 289.67 601 282 600.5 C274.33 600 267.83 598.58 262 597 C256.17 595.42 250.42 593.33 247 591 C243.58 588.67 241.33 586.17 241.5 583 Z" fill="#10f4f8"/><path d="M271.5 556 L290 549.5 L297 559 L280 568.5 L273 566 Z" fill="#20aef0" stroke="#20aef0" stroke-width="1.5" stroke-linejoin="round"/><path d="M312 549.5 L329 551.5 L331 554 L316 553 Z M288 576 L303 568.5 L306 571 L291 578.5 Z" fill="#e8fcfc" stroke="#e8fcfc" stroke-width="1" stroke-linejoin="round"/><path d="M325 544.5 L334 545.5 L333 547 L325 546 Z" fill="#0828c8"/></svg>
<svg style="left:22px;top:157.5px" width="11.4" height="12.35" viewBox="0 0 12 13"><path d="M2 0.5 L2 11 L10 11 " stroke="#222" stroke-width="1" fill="none"/><path d="M0.5 0.5 L3.5 0.5 M10 9.5 L11.5 12.5 M11.5 9.5 L10 12.5" stroke="#222" stroke-width="0.7" fill="none"/></svg>
<span class="t" style="left:31.5px;top:164.4px;font-size:6px;line-height:7.2px;color:#222;transform:scaleX(0.810);">x</span>
<svg style="left:220.5px;top:157.5px" width="11.4" height="12.35" viewBox="0 0 12 13"><path d="M2 0.5 L2 11 L10 11 " stroke="#222" stroke-width="1" fill="none"/><path d="M0.5 0.5 L3.5 0.5 M10 9.5 L11.5 12.5 M11.5 9.5 L10 12.5" stroke="#222" stroke-width="0.7" fill="none"/></svg>
<span class="t" style="left:230px;top:164.4px;font-size:6px;line-height:7.2px;color:#222;transform:scaleX(0.810);">y</span>
<svg style="left:22px;top:260px" width="11.4" height="12.35" viewBox="0 0 12 13"><path d="M2 0.5 L2 11 L10 11 " stroke="#222" stroke-width="1" fill="none"/><path d="M0.5 0.5 L3.5 0.5 M10 9.5 L11.5 12.5 M11.5 9.5 L10 12.5" stroke="#222" stroke-width="0.7" fill="none"/></svg>
<span class="t" style="left:31.5px;top:266.9px;font-size:6px;line-height:7.2px;color:#222;transform:scaleX(0.810);">x</span>
<svg style="left:220.5px;top:260px" width="11.4" height="12.35" viewBox="0 0 12 13"><path d="M2 0.5 L2 11 L10 11 M2 11 L6 7" stroke="#222" stroke-width="1" fill="none"/><path d="M0.5 0.5 L3.5 0.5 M10 9.5 L11.5 12.5 M11.5 9.5 L10 12.5" stroke="#222" stroke-width="0.7" fill="none"/></svg>
<span class="t" style="left:230px;top:266.9px;font-size:6px;line-height:7.2px;color:#222;transform:scaleX(0.810);">x</span>
<div class="inp" style="left:414.5px;top:48.5px;width:8px;height:8px;"></div>
<svg style="left:414.5px;top:48.5px" width="8" height="8" viewBox="0 0 8 8"><path d="M1.5 4 L3.3 6 L6.7 1.8" stroke="#111" stroke-width="1.5" fill="none"/></svg>
<span class="t" style="left:427px;top:48.78px;font-size:8.7px;line-height:10.44px;color:#000;transform:scaleX(0.798);">Все виды</span>
<div class="grp" style="left:412.5px;top:66px;width:50px;height:151px;"></div>
<div style="left:418px;top:61px;width:39px;height:10px;background:var(--pg);"></div>
<span class="t" style="left:420px;top:60.78px;font-size:8.7px;line-height:10.44px;color:#1a1a1a;transform:scaleX(0.884);">Оболочка</span>
<div class="btnp" style="left:417.5px;top:75.7px;width:41px;height:11.7px;"></div>
<span class="t" style="left:434.67px;top:77.33px;font-size:8.7px;line-height:10.44px;color:#000;transform:scaleX(0.810);">W</span>
<div class="btn" style="left:417.5px;top:99.9px;width:41px;height:11.8px;"></div>
<span class="t" style="left:433.89px;top:100.88px;font-size:8.7px;line-height:10.44px;color:#000;transform:scaleX(0.810);">Mr</span>
<div class="btn" style="left:417.5px;top:118.3px;width:41px;height:11.9px;"></div>
<span class="t" style="left:434.09px;top:119.33px;font-size:8.7px;line-height:10.44px;color:#000;transform:scaleX(0.810);">Mt</span>
<div class="btn" style="left:417.5px;top:136.8px;width:41px;height:12.4px;"></div>
<span class="t" style="left:432.91px;top:138.08px;font-size:8.7px;line-height:10.44px;color:#000;transform:scaleX(0.810);">Mrt</span>
<div class="btn" style="left:417.5px;top:160px;width:41px;height:12.4px;"></div>
<span class="t" style="left:434.28px;top:161.28px;font-size:8.7px;line-height:10.44px;color:#000;transform:scaleX(0.810);">Nr</span>
<div class="btn" style="left:417.5px;top:180.3px;width:41px;height:11.7px;"></div>
<span class="t" style="left:434.48px;top:181.23px;font-size:8.7px;line-height:10.44px;color:#000;transform:scaleX(0.810);">Nt</span>
<div class="btn" style="left:417.5px;top:200px;width:41px;height:12px;"></div>
<span class="t" style="left:433.83px;top:201.08px;font-size:8.7px;line-height:10.44px;color:#000;transform:scaleX(0.810);">Trt</span>
<div class="grp" style="left:412.5px;top:225px;width:50px;height:57.5px;"></div>
<div style="left:417px;top:220px;width:29px;height:10px;background:var(--pg);"></div>
<span class="t" style="left:419px;top:219.78px;font-size:8.7px;line-height:10.44px;color:#1a1a1a;transform:scaleX(0.897);">Контур</span>
<div class="btn" style="left:417.5px;top:230.4px;width:41px;height:11.6px;"></div>
<span class="t" style="left:435.46px;top:231.28px;font-size:8.7px;line-height:10.44px;color:#000;transform:scaleX(0.810);">N</span>
<div class="btn" style="left:417.5px;top:249.4px;width:41px;height:11.8px;"></div>
<span class="t" style="left:435.06px;top:250.38px;font-size:8.7px;line-height:10.44px;color:#000;transform:scaleX(0.810);">M</span>
<div class="btn" style="left:417.5px;top:268.6px;width:41px;height:11.4px;"></div>
<span class="t" style="left:435.26px;top:269.38px;font-size:8.7px;line-height:10.44px;color:#000;transform:scaleX(0.810);">Q</span>
<span class="t" style="left:22px;top:288.28px;font-size:8.7px;line-height:10.44px;color:#000;transform:scaleX(0.820);">Перемещения и напряжения</span>
<div class="btn" style="left:157px;top:288.5px;width:39px;height:10.5px;"></div>
<span class="t" style="left:163.05px;top:288.83px;font-size:8.7px;line-height:10.44px;color:#000;transform:scaleX(0.810);">Удалить</span>
<div class="btn" style="left:205px;top:288.5px;width:39.5px;height:10.5px;"></div>
<span class="t" style="left:209.41px;top:288.83px;font-size:8.7px;line-height:10.44px;color:#000;transform:scaleX(0.810);">Очистить</span>
<span class="t" style="left:321.5px;top:288.28px;font-size:8.7px;line-height:10.44px;color:#000;transform:scaleX(0.745);">X(м)</span>
<div class="inp" style="left:335.5px;top:288px;width:23.5px;height:11px;"></div>
<span class="t" style="left:337.5px;top:287.98px;font-size:8.7px;line-height:10.44px;color:#222;transform:scaleX(0.810);">0</span>
<span class="t" style="left:366px;top:288.28px;font-size:8.7px;line-height:10.44px;color:#000;transform:scaleX(0.796);">Y(м)</span>
<div class="inp" style="left:382px;top:288px;width:25px;height:11px;"></div>
<span class="t" style="left:384px;top:287.98px;font-size:8.7px;line-height:10.44px;color:#222;transform:scaleX(0.810);">0</span>
<div class="btn" style="left:416.6px;top:288.5px;width:39.9px;height:10.5px;"></div>
<span class="t" style="left:421.61px;top:288.83px;font-size:8.7px;line-height:10.44px;color:#000;transform:scaleX(0.810);">Вставить</span>
<div class="cv" style="left:19px;top:304px;width:363.4px;height:83px;overflow:hidden;"></div>
<div style="left:20px;top:305px;width:25.13px;height:10px;background:var(--bg);border:1px solid;border-color:#fff #b0ad9c #b0ad9c #fff;"></div>
<span class="t" style="left:23px;top:305.08px;font-size:8.2px;line-height:9.84px;color:#000;transform:scaleX(0.810);">№ ...</span>
<div style="left:45.13px;top:305px;width:29.02px;height:10px;background:var(--bg);border:1px solid;border-color:#fff #b0ad9c #b0ad9c #fff;"></div>
<span class="t" style="left:57.98px;top:305.08px;font-size:8.2px;line-height:9.84px;color:#000;transform:scaleX(0.810);">x</span>
<div style="left:74.15px;top:305px;width:28.83px;height:10px;background:var(--bg);border:1px solid;border-color:#fff #b0ad9c #b0ad9c #fff;"></div>
<span class="t" style="left:86.9px;top:305.08px;font-size:8.2px;line-height:9.84px;color:#000;transform:scaleX(0.810);">y</span>
<div style="left:102.98px;top:305px;width:29.29px;height:10px;background:var(--bg);border:1px solid;border-color:#fff #b0ad9c #b0ad9c #fff;"></div>
<span class="t" style="left:115.97px;top:305.08px;font-size:8.2px;line-height:9.84px;color:#000;transform:scaleX(0.810);">z</span>
<div style="left:132.27px;top:305px;width:33.48px;height:10px;background:var(--bg);border:1px solid;border-color:#fff #b0ad9c #b0ad9c #fff;"></div>
<span class="t" style="left:145.88px;top:305.08px;font-size:8.2px;line-height:9.84px;color:#000;transform:scaleX(0.810);">W</span>
<div style="left:165.75px;top:305px;width:33.39px;height:10px;background:var(--bg);border:1px solid;border-color:#fff #b0ad9c #b0ad9c #fff;"></div>
<span class="t" style="left:178.57px;top:305.08px;font-size:8.2px;line-height:9.84px;color:#000;transform:scaleX(0.810);">Mr</span>
<div style="left:199.14px;top:305px;width:33.48px;height:10px;background:var(--bg);border:1px solid;border-color:#fff #b0ad9c #b0ad9c #fff;"></div>
<span class="t" style="left:212.19px;top:305.08px;font-size:8.2px;line-height:9.84px;color:#000;transform:scaleX(0.810);">Mt</span>
<div style="left:232.62px;top:305px;width:33.67px;height:10px;background:var(--bg);border:1px solid;border-color:#fff #b0ad9c #b0ad9c #fff;"></div>
<span class="t" style="left:244.66px;top:305.08px;font-size:8.2px;line-height:9.84px;color:#000;transform:scaleX(0.810);">Mrt</span>
<div style="left:266.29px;top:305px;width:33.48px;height:10px;background:var(--bg);border:1px solid;border-color:#fff #b0ad9c #b0ad9c #fff;"></div>
<span class="t" style="left:279.52px;top:305.08px;font-size:8.2px;line-height:9.84px;color:#000;transform:scaleX(0.810);">Nr</span>
<div style="left:299.77px;top:305px;width:33.85px;height:10px;background:var(--bg);border:1px solid;border-color:#fff #b0ad9c #b0ad9c #fff;"></div>
<span class="t" style="left:313.37px;top:305.08px;font-size:8.2px;line-height:9.84px;color:#000;transform:scaleX(0.810);">Nt</span>
<div style="left:333.62px;top:305px;width:36.27px;height:10px;background:var(--bg);border:1px solid;border-color:#fff #b0ad9c #b0ad9c #fff;"></div>
<span class="t" style="left:347.82px;top:305.08px;font-size:8.2px;line-height:9.84px;color:#000;transform:scaleX(0.810);">Trt</span>
<div style="left:20px;top:315px;width:349.89px;height:2px;background:#fff;"></div>
<div style="left:20px;top:317px;width:349.89px;height:69px;background:#00ffff;"></div>
<div style="left:44.63px;top:317px;width:1px;height:69px;background:#a8ffff;"></div>
<div style="left:73.65px;top:317px;width:1px;height:69px;background:#a8ffff;"></div>
<div style="left:102.48px;top:317px;width:1px;height:69px;background:#a8ffff;"></div>
<div style="left:131.77px;top:317px;width:1px;height:69px;background:#a8ffff;"></div>
<div style="left:165.25px;top:317px;width:1px;height:69px;background:#a8ffff;"></div>
<div style="left:198.64px;top:317px;width:1px;height:69px;background:#a8ffff;"></div>
<div style="left:232.12px;top:317px;width:1px;height:69px;background:#a8ffff;"></div>
<div style="left:265.79px;top:317px;width:1px;height:69px;background:#a8ffff;"></div>
<div style="left:299.27px;top:317px;width:1px;height:69px;background:#a8ffff;"></div>
<div style="left:333.12px;top:317px;width:1px;height:69px;background:#a8ffff;"></div>
<div style="left:20px;top:325.7px;width:349.89px;height:0.8px;background:#90ffff;"></div>
<div style="left:20px;top:334.8px;width:349.89px;height:0.8px;background:#90ffff;"></div>
<div style="left:20px;top:343.9px;width:349.89px;height:0.8px;background:#90ffff;"></div>
<div style="left:20px;top:353px;width:349.89px;height:0.8px;background:#90ffff;"></div>
<div style="left:20px;top:362.1px;width:349.89px;height:0.8px;background:#90ffff;"></div>
<div style="left:20px;top:371.2px;width:349.89px;height:0.8px;background:#90ffff;"></div>
<div style="left:20px;top:380.3px;width:349.89px;height:0.8px;background:#90ffff;"></div>
<span class="t" style="left:22px;top:316.93px;font-size:8.7px;line-height:10.44px;color:#123;transform:scaleX(0.810);">1</span>
<span class="t" style="left:57.68px;top:316.93px;font-size:8.7px;line-height:10.44px;color:#123;transform:scaleX(0.810);">5</span>
<span class="t" style="left:86.6px;top:316.93px;font-size:8.7px;line-height:10.44px;color:#123;transform:scaleX(0.810);">0</span>
<span class="t" style="left:115.67px;top:316.93px;font-size:8.7px;line-height:10.44px;color:#123;transform:scaleX(0.810);">0</span>
<span class="t" style="left:147.05px;top:316.93px;font-size:8.7px;line-height:10.44px;color:#123;transform:scaleX(0.810);">0</span>
<span class="t" style="left:170.5px;top:316.93px;font-size:8.7px;line-height:10.44px;color:#123;transform:scaleX(0.810);">-0.0122</span>
<span class="t" style="left:202.95px;top:316.93px;font-size:8.7px;line-height:10.44px;color:#123;transform:scaleX(0.810);">-0.002...</span>
<span class="t" style="left:237.7px;top:316.93px;font-size:8.7px;line-height:10.44px;color:#123;transform:scaleX(0.810);">0.000...</span>
<span class="t" style="left:275.97px;top:316.93px;font-size:8.7px;line-height:10.44px;color:#123;transform:scaleX(0.810);">-226</span>
<span class="t" style="left:308.66px;top:316.93px;font-size:8.7px;line-height:10.44px;color:#123;transform:scaleX(0.810);">-45.2</span>
<span class="t" style="left:344.9px;top:316.93px;font-size:8.7px;line-height:10.44px;color:#123;transform:scaleX(0.810);">2.56</span>
<span class="t" style="left:22px;top:326.03px;font-size:8.7px;line-height:10.44px;color:#123;transform:scaleX(0.810);">2</span>
<span class="t" style="left:52.78px;top:326.03px;font-size:8.7px;line-height:10.44px;color:#123;transform:scaleX(0.810);">4.92</span>
<span class="t" style="left:79.75px;top:326.03px;font-size:8.7px;line-height:10.44px;color:#123;transform:scaleX(0.810);">0.868</span>
<span class="t" style="left:115.67px;top:326.03px;font-size:8.7px;line-height:10.44px;color:#123;transform:scaleX(0.810);">0</span>
<span class="t" style="left:147.05px;top:326.03px;font-size:8.7px;line-height:10.44px;color:#123;transform:scaleX(0.810);">0</span>
<span class="t" style="left:170.5px;top:326.03px;font-size:8.7px;line-height:10.44px;color:#123;transform:scaleX(0.810);">-0.0103</span>
<span class="t" style="left:202.95px;top:326.03px;font-size:8.7px;line-height:10.44px;color:#123;transform:scaleX(0.810);">-0.001...</span>
<span class="t" style="left:236.53px;top:326.03px;font-size:8.7px;line-height:10.44px;color:#123;transform:scaleX(0.810);">-0.000...</span>
<span class="t" style="left:275.97px;top:326.03px;font-size:8.7px;line-height:10.44px;color:#123;transform:scaleX(0.810);">-235</span>
<span class="t" style="left:308.66px;top:326.03px;font-size:8.7px;line-height:10.44px;color:#123;transform:scaleX(0.810);">-57.2</span>
<span class="t" style="left:344.9px;top:326.03px;font-size:8.7px;line-height:10.44px;color:#123;transform:scaleX(0.810);">17.1</span>
<span class="t" style="left:22px;top:335.13px;font-size:8.7px;line-height:10.44px;color:#123;transform:scaleX(0.810);">3</span>
<span class="t" style="left:54.74px;top:335.13px;font-size:8.7px;line-height:10.44px;color:#123;transform:scaleX(0.810);">4.7</span>
<span class="t" style="left:81.71px;top:335.13px;font-size:8.7px;line-height:10.44px;color:#123;transform:scaleX(0.810);">1.71</span>
<span class="t" style="left:115.67px;top:335.13px;font-size:8.7px;line-height:10.44px;color:#123;transform:scaleX(0.810);">0</span>
<span class="t" style="left:147.05px;top:335.13px;font-size:8.7px;line-height:10.44px;color:#123;transform:scaleX(0.810);">0</span>
<span class="t" style="left:172.46px;top:335.13px;font-size:8.7px;line-height:10.44px;color:#123;transform:scaleX(0.810);">-0.012</span>
<span class="t" style="left:202.95px;top:335.13px;font-size:8.7px;line-height:10.44px;color:#123;transform:scaleX(0.810);">-0.002...</span>
<span class="t" style="left:237.7px;top:335.13px;font-size:8.7px;line-height:10.44px;color:#123;transform:scaleX(0.810);">0.000...</span>
<span class="t" style="left:275.97px;top:335.13px;font-size:8.7px;line-height:10.44px;color:#123;transform:scaleX(0.810);">-227</span>
<span class="t" style="left:308.66px;top:335.13px;font-size:8.7px;line-height:10.44px;color:#123;transform:scaleX(0.810);">-45.7</span>
<span class="t" style="left:344.9px;top:335.13px;font-size:8.7px;line-height:10.44px;color:#123;transform:scaleX(0.810);">7.79</span>
<span class="t" style="left:22px;top:344.23px;font-size:8.7px;line-height:10.44px;color:#123;transform:scaleX(0.810);">4</span>
<span class="t" style="left:52.78px;top:344.23px;font-size:8.7px;line-height:10.44px;color:#123;transform:scaleX(0.810);">4.33</span>
<span class="t" style="left:83.67px;top:344.23px;font-size:8.7px;line-height:10.44px;color:#123;transform:scaleX(0.810);">2.5</span>
<span class="t" style="left:115.67px;top:344.23px;font-size:8.7px;line-height:10.44px;color:#123;transform:scaleX(0.810);">0</span>
<span class="t" style="left:147.05px;top:344.23px;font-size:8.7px;line-height:10.44px;color:#123;transform:scaleX(0.810);">0</span>
<span class="t" style="left:174.42px;top:344.23px;font-size:8.7px;line-height:10.44px;color:#123;transform:scaleX(0.810);">-0.01</span>
<span class="t" style="left:202.95px;top:344.23px;font-size:8.7px;line-height:10.44px;color:#123;transform:scaleX(0.810);">-0.001...</span>
<span class="t" style="left:236.53px;top:344.23px;font-size:8.7px;line-height:10.44px;color:#123;transform:scaleX(0.810);">-0.000...</span>
<span class="t" style="left:275.97px;top:344.23px;font-size:8.7px;line-height:10.44px;color:#123;transform:scaleX(0.810);">-240</span>
<span class="t" style="left:308.66px;top:344.23px;font-size:8.7px;line-height:10.44px;color:#123;transform:scaleX(0.810);">-57.3</span>
<span class="t" style="left:344.9px;top:344.23px;font-size:8.7px;line-height:10.44px;color:#123;transform:scaleX(0.810);">21.3</span>
<span class="t" style="left:22px;top:353.33px;font-size:8.7px;line-height:10.44px;color:#123;transform:scaleX(0.810);">5</span>
<span class="t" style="left:52.78px;top:353.33px;font-size:8.7px;line-height:10.44px;color:#123;transform:scaleX(0.810);">3.83</span>
<span class="t" style="left:81.71px;top:353.33px;font-size:8.7px;line-height:10.44px;color:#123;transform:scaleX(0.810);">3.21</span>
<span class="t" style="left:115.67px;top:353.33px;font-size:8.7px;line-height:10.44px;color:#123;transform:scaleX(0.810);">0</span>
<span class="t" style="left:147.05px;top:353.33px;font-size:8.7px;line-height:10.44px;color:#123;transform:scaleX(0.810);">0</span>
<span class="t" style="left:170.76px;top:353.33px;font-size:8.7px;line-height:10.44px;color:#123;transform:scaleX(0.810);">-0.0118</span>
<span class="t" style="left:203.93px;top:353.33px;font-size:8.7px;line-height:10.44px;color:#123;transform:scaleX(0.810);">-0.0023</span>
<span class="t" style="left:237.7px;top:353.33px;font-size:8.7px;line-height:10.44px;color:#123;transform:scaleX(0.810);">0.000...</span>
<span class="t" style="left:275.97px;top:353.33px;font-size:8.7px;line-height:10.44px;color:#123;transform:scaleX(0.810);">-230</span>
<span class="t" style="left:308.66px;top:353.33px;font-size:8.7px;line-height:10.44px;color:#123;transform:scaleX(0.810);">-46.6</span>
<span class="t" style="left:344.9px;top:353.33px;font-size:8.7px;line-height:10.44px;color:#123;transform:scaleX(0.810);">12.5</span>
<span class="t" style="left:22px;top:362.43px;font-size:8.7px;line-height:10.44px;color:#123;transform:scaleX(0.810);">6</span>
<span class="t" style="left:52.78px;top:362.43px;font-size:8.7px;line-height:10.44px;color:#123;transform:scaleX(0.810);">3.21</span>
<span class="t" style="left:81.71px;top:362.43px;font-size:8.7px;line-height:10.44px;color:#123;transform:scaleX(0.810);">3.83</span>
<span class="t" style="left:115.67px;top:362.43px;font-size:8.7px;line-height:10.44px;color:#123;transform:scaleX(0.810);">0</span>
<span class="t" style="left:147.05px;top:362.43px;font-size:8.7px;line-height:10.44px;color:#123;transform:scaleX(0.810);">0</span>
<span class="t" style="left:170.5px;top:362.43px;font-size:8.7px;line-height:10.44px;color:#123;transform:scaleX(0.810);">-0.0097</span>
<span class="t" style="left:203.93px;top:362.43px;font-size:8.7px;line-height:10.44px;color:#123;transform:scaleX(0.810);">-0.0018</span>
<span class="t" style="left:236.53px;top:362.43px;font-size:8.7px;line-height:10.44px;color:#123;transform:scaleX(0.810);">-0.000...</span>
<span class="t" style="left:275.97px;top:362.43px;font-size:8.7px;line-height:10.44px;color:#123;transform:scaleX(0.810);">-246</span>
<span class="t" style="left:308.66px;top:362.43px;font-size:8.7px;line-height:10.44px;color:#123;transform:scaleX(0.810);">-57.4</span>
<span class="t" style="left:344.9px;top:362.43px;font-size:8.7px;line-height:10.44px;color:#123;transform:scaleX(0.810);">24.3</span>
<span class="t" style="left:22px;top:371.53px;font-size:8.7px;line-height:10.44px;color:#123;transform:scaleX(0.810);">7</span>
<span class="t" style="left:54.74px;top:371.53px;font-size:8.7px;line-height:10.44px;color:#123;transform:scaleX(0.810);">2.5</span>
<span class="t" style="left:81.71px;top:371.53px;font-size:8.7px;line-height:10.44px;color:#123;transform:scaleX(0.810);">4.33</span>
<span class="t" style="left:115.67px;top:371.53px;font-size:8.7px;line-height:10.44px;color:#123;transform:scaleX(0.810);">0</span>
<span class="t" style="left:147.05px;top:371.53px;font-size:8.7px;line-height:10.44px;color:#123;transform:scaleX(0.810);">0</span>
<span class="t" style="left:170.76px;top:371.53px;font-size:8.7px;line-height:10.44px;color:#123;transform:scaleX(0.810);">-0.0114</span>
<span class="t" style="left:202.95px;top:371.53px;font-size:8.7px;line-height:10.44px;color:#123;transform:scaleX(0.810);">-0.002...</span>
<span class="t" style="left:237.7px;top:371.53px;font-size:8.7px;line-height:10.44px;color:#123;transform:scaleX(0.810);">0.000...</span>
<span class="t" style="left:275.97px;top:371.53px;font-size:8.7px;line-height:10.44px;color:#123;transform:scaleX(0.810);">-234</span>
<span class="t" style="left:308.66px;top:371.53px;font-size:8.7px;line-height:10.44px;color:#123;transform:scaleX(0.810);">-47.8</span>
<span class="t" style="left:344.9px;top:371.53px;font-size:8.7px;line-height:10.44px;color:#123;transform:scaleX(0.810);">16.7</span>
<span class="t" style="left:22px;top:380.63px;font-size:8.7px;line-height:10.44px;color:#123;transform:scaleX(0.810);clip-path:inset(-2px -2px 5.07px -2px);">8</span>
<span class="t" style="left:52.78px;top:380.63px;font-size:8.7px;line-height:10.44px;color:#123;transform:scaleX(0.810);clip-path:inset(-2px -2px 5.07px -2px);">1.71</span>
<span class="t" style="left:83.67px;top:380.63px;font-size:8.7px;line-height:10.44px;color:#123;transform:scaleX(0.810);clip-path:inset(-2px -2px 5.07px -2px);">4.7</span>
<span class="t" style="left:115.67px;top:380.63px;font-size:8.7px;line-height:10.44px;color:#123;transform:scaleX(0.810);clip-path:inset(-2px -2px 5.07px -2px);">0</span>
<span class="t" style="left:147.05px;top:380.63px;font-size:8.7px;line-height:10.44px;color:#123;transform:scaleX(0.810);clip-path:inset(-2px -2px 5.07px -2px);">0</span>
<span class="t" style="left:172.46px;top:380.63px;font-size:8.7px;line-height:10.44px;color:#123;transform:scaleX(0.810);clip-path:inset(-2px -2px 5.07px -2px);">-0.009</span>
<span class="t" style="left:205.89px;top:380.63px;font-size:8.7px;line-height:10.44px;color:#123;transform:scaleX(0.810);clip-path:inset(-2px -2px 5.07px -2px);">-0.001</span>
<span class="t" style="left:239.46px;top:380.63px;font-size:8.7px;line-height:10.44px;color:#123;transform:scaleX(0.810);clip-path:inset(-2px -2px 5.07px -2px);">-0.000</span>
<span class="t" style="left:275.97px;top:380.63px;font-size:8.7px;line-height:10.44px;color:#123;transform:scaleX(0.810);clip-path:inset(-2px -2px 5.07px -2px);">-252</span>
<span class="t" style="left:308.66px;top:380.63px;font-size:8.7px;line-height:10.44px;color:#123;transform:scaleX(0.810);clip-path:inset(-2px -2px 5.07px -2px);">-57.5</span>
<span class="t" style="left:344.9px;top:380.63px;font-size:8.7px;line-height:10.44px;color:#123;transform:scaleX(0.810);clip-path:inset(-2px -2px 5.07px -2px);">26.1</span>
<div style="left:369px;top:305px;width:11.4px;height:81px;background:#f4f3ee;"></div>
<div style="left:369px;top:305px;width:11.4px;height:11.4px;background:#c3d3fb;border:1px solid #e8eefe;border-radius:2px;"></div>
<svg style="left:369px;top:305px" width="11.4" height="11.4" viewBox="0 0 10 10"><path d="M2.5 6 L5 3.5 L7.5 6" stroke="#4d6185" stroke-width="1.6" fill="none"/></svg>
<div style="left:369px;top:374.6px;width:11.4px;height:11.4px;background:#c3d3fb;border:1px solid #e8eefe;border-radius:2px;"></div>
<svg style="left:369px;top:374.6px" width="11.4" height="11.4" viewBox="0 0 10 10"><path d="M2.5 4 L5 6.5 L7.5 4" stroke="#4d6185" stroke-width="1.6" fill="none"/></svg>
<div style="left:369px;top:316.9px;width:11.4px;height:4.5px;background:#c3d3fb;border:1px solid #e8eefe;border-radius:1px;"></div>
<span class="t" style="left:414px;top:302.78px;font-size:8.7px;line-height:10.44px;color:#000;transform:scaleX(0.710);">Моменты</span>
<div class="inp" style="left:414px;top:317px;width:40px;height:10.7px;"></div>
<span class="t" style="left:417px;top:317.43px;font-size:8.7px;line-height:10.44px;color:#222;transform:scaleX(0.810);">тм/м</span>
<div style="left:444.8px;top:318.5px;width:7.7px;height:7.7px;background:#e4e1d2;border:1px solid;border-color:#fff #6f6d62 #6f6d62 #fff;"></div>
<svg style="left:444.65px;top:319.75px" width="8" height="6" viewBox="0 0 8 6"><path d="M1.2 1.3 L6.8 1.3 L4 4.6 Z" fill="#111"/></svg>
<span class="t" style="left:414px;top:338.78px;font-size:8.7px;line-height:10.44px;color:#000;transform:scaleX(0.835);">Напряжения</span>
<div class="inp" style="left:414px;top:352px;width:40px;height:11px;"></div>
<span class="t" style="left:417px;top:352.58px;font-size:8.7px;line-height:10.44px;color:#222;transform:scaleX(0.810);">т/м2</span>
<div style="left:444.5px;top:353.5px;width:8px;height:8px;background:#e4e1d2;border:1px solid;border-color:#fff #6f6d62 #6f6d62 #fff;"></div>
<svg style="left:444.5px;top:354.9px" width="8" height="6" viewBox="0 0 8 6"><path d="M1.2 1.3 L6.8 1.3 L4 4.6 Z" fill="#111"/></svg>
<div style="left:19.5px;top:390.5px;width:228.5px;height:13px;background:#f3f1e8;border:1px solid;border-color:#6f6d62 #fff #fff #6f6d62;"></div>
<div class="btn" style="left:402px;top:392.5px;width:55px;height:11.5px;"></div>
<span class="t" style="left:419.85px;top:393.33px;font-size:8.7px;line-height:10.44px;color:#000;transform:scaleX(0.810);">Отчет</span>
<div class="btn" style="left:367.75px;top:419px;width:46.25px;height:13.5px;"></div>
<span class="t" style="left:380.33px;top:420.83px;font-size:8.7px;line-height:10.44px;color:#000;transform:scaleX(0.810);">Выход</span>
<div class="btn" style="left:420px;top:419px;width:45px;height:13.5px;"></div>
<span class="t" style="left:428.68px;top:420.83px;font-size:8.7px;line-height:10.44px;color:#000;transform:scaleX(0.810);">Справка</span>
</div>
<div class="win" style="left:487px;top:230px;width:515px;height:470px;border-radius:5px 5px 0 0;filter:blur(0.25px);">
<div class="ttl" style="left:0px;top:0px;width:515px;height:19px;border-radius:4px 4px 0 0;"></div>
<svg style="left:6.5px;top:6px" width="9.5" height="7.6" viewBox="0 0 10 8"><path d="M0.5 5.5 C0.5 1.5 3 0.5 5 0.5 C7 0.5 9.5 1.5 9.5 5.5 C8 7.5 2 7.5 0.5 5.5 Z" fill="#fff"/><path d="M1.2 3 C1.8 1.6 2.8 0.9 4 0.6" stroke="#d02020" stroke-width="1.1" fill="none"/></svg>
<span class="t" style="left:18px;top:5.12px;font-size:9.8px;line-height:11.76px;color:#fff;font-weight:bold;transform:scaleX(0.925);">Статический расчет круглой в плане оболочки</span>
<div style="left:496.5px;top:4px;width:13px;height:13px;background:linear-gradient(135deg,#eea388,#dc6a42 55%,#c24a22);border:1px solid #f6ece6;border-radius:2.5px;"></div>
<svg style="left:496.5px;top:4px" width="13" height="13" viewBox="0 0 12 12"><path d="M3.2 3.2 L8.8 8.8 M8.8 3.2 L3.2 8.8" stroke="#fff" stroke-width="1.8" stroke-linecap="round"/></svg>
<div style="left:0px;top:19px;width:3px;height:451px;background:#1440d0;"></div>
<div style="left:512px;top:19px;width:3px;height:451px;background:#0c2a9c;"></div>
<div style="left:3px;top:19px;width:509px;height:3.5px;background:#f4f2ee;"></div>
<div style="left:0px;top:467px;width:515px;height:3px;background:#1440d0;"></div>
<div class="page" style="left:7px;top:39px;width:499.5px;height:408.5px;"></div>
<div style="left:9px;top:28px;width:72px;height:11px;background:#f2f0e6;border:1px solid;border-color:#fdfdfb transparent transparent #fdfdfb;border-radius:2px 0 0 0;"></div>
<div style="left:81px;top:25.5px;width:80px;height:14.5px;background:var(--pg);border:1px solid;border-color:#fdfdfb #77756a var(--pg) #fdfdfb;border-radius:2px 2px 0 0;box-shadow:1px 0 0 #aca899;"></div>
<span class="t" style="left:12.7px;top:28.02px;font-size:8.8px;line-height:10.56px;color:#000;transform:scaleX(0.857);">Исходные данные</span>
<span class="t" style="left:84.6px;top:26.72px;font-size:8.8px;line-height:10.56px;color:#000;transform:scaleX(0.895);">Результаты расчета</span>
<div class="cv" style="left:15.4px;top:48px;width:429.1px;height:257px;"></div>
<div style="left:47px;top:55px;width:41.52px;height:7.5px;background:#00007c;border-left:1px solid #111;"></div>
<div style="left:88.22px;top:55px;width:41.52px;height:7.5px;background:#0000e4;border-left:1px solid #111;"></div>
<div style="left:129.44px;top:55px;width:41.52px;height:7.5px;background:#1cb0f0;border-left:1px solid #111;"></div>
<div style="left:170.67px;top:55px;width:41.52px;height:7.5px;background:#18f0f8;border-left:1px solid #111;"></div>
<div style="left:211.89px;top:55px;width:41.52px;height:7.5px;background:#b4f2fc;border-left:1px solid #111;"></div>
<div style="left:253.11px;top:55px;width:41.52px;height:7.5px;background:#ffffc8;border-left:1px solid #111;"></div>
<div style="left:294.33px;top:55px;width:41.52px;height:7.5px;background:#ffee00;border-left:1px solid #111;"></div>
<div style="left:335.56px;top:55px;width:41.52px;height:7.5px;background:#ffb000;border-left:1px solid #111;"></div>
<div style="left:376.78px;top:55px;width:41.52px;height:7.5px;background:#7c0000;border-left:1px solid #111;"></div>
<div style="left:47px;top:55px;width:371.5px;height:7.5px;border:1px solid #223;border-top-color:#556;"></div>
<span class="t" style="left:29.55px;top:64.14px;font-size:8.6px;line-height:10.32px;color:#111;transform:scaleX(0.870);">-5.5e+002</span>
<span class="t" style="left:70.77px;top:64.14px;font-size:8.6px;line-height:10.32px;color:#111;transform:scaleX(0.870);">-4.1e+002</span>
<span class="t" style="left:111.99px;top:64.14px;font-size:8.6px;line-height:10.32px;color:#111;transform:scaleX(0.870);">-2.8e+002</span>
<span class="t" style="left:153.21px;top:64.14px;font-size:8.6px;line-height:10.32px;color:#111;transform:scaleX(0.870);">-1.4e+002</span>
<span class="t" style="left:204.94px;top:64.14px;font-size:8.6px;line-height:10.32px;color:#111;transform:scaleX(0.870);">-3.1</span>
<span class="t" style="left:247.41px;top:64.14px;font-size:8.6px;line-height:10.32px;color:#111;transform:scaleX(0.870);">3.1</span>
<span class="t" style="left:278.13px;top:64.14px;font-size:8.6px;line-height:10.32px;color:#111;transform:scaleX(0.870);">1.4e+002</span>
<span class="t" style="left:319.35px;top:64.14px;font-size:8.6px;line-height:10.32px;color:#111;transform:scaleX(0.870);">2.8e+002</span>
<span class="t" style="left:360.57px;top:64.14px;font-size:8.6px;line-height:10.32px;color:#111;transform:scaleX(0.870);">4.1e+002</span>
<span class="t" style="left:401.79px;top:64.14px;font-size:8.6px;line-height:10.32px;color:#111;transform:scaleX(0.870);">5.5e+002</span>
<span class="t" style="left:213px;top:74.34px;font-size:8.6px;line-height:10.32px;color:#111;transform:scaleX(0.934);">Trt (т/м2)</span>
<svg style="left:15.4px;top:48px" width="429.1" height="257" viewBox="502.4 278 429.1 257"><defs><clipPath id="sh3"><path d="M554.77 453.73 C554.42 451.09 555.12 448.92 556.17 446.69 C557.23 444.47 559.1 442.42 561.1 440.37 C563.09 438.31 562.86 438.61 568.13 434.39 C573.4 430.17 582.78 422.08 592.74 415.05 C602.71 408.02 616.18 398.64 627.9 392.19 C639.62 385.75 651.35 380.59 663.07 376.37 C674.79 372.15 686.51 368.93 698.23 366.88 C709.95 364.83 721.67 364.24 733.39 364.06 C745.11 363.89 756.83 364.53 768.55 365.82 C780.27 367.11 791.99 368.58 803.71 371.8 C815.43 375.02 828.91 380.59 838.87 385.16 C848.84 389.73 857.04 394.54 863.49 399.23 C869.93 403.91 874.92 409.19 877.55 413.29 C880.19 417.39 880.48 420.03 879.31 423.84 C878.14 427.65 875.5 431.46 870.52 436.15 C865.54 440.83 857.63 447.28 849.42 451.97 C841.22 456.66 831.84 460.47 821.29 464.28 C810.75 468.08 797.85 471.72 786.13 474.82 C774.41 477.93 762.69 480.74 750.97 482.91 C739.25 485.08 727.53 486.54 715.81 487.83 C704.09 489.12 692.37 490.18 680.65 490.65 C668.93 491.12 657.21 491.23 645.49 490.65 C633.76 490.06 620.87 488.89 610.32 487.13 C599.77 485.37 589.52 482.85 582.19 480.1 C574.87 477.34 570.36 473.53 566.37 470.6 C562.39 467.67 560.22 465.33 558.28 462.52 C556.35 459.7 555.12 456.36 554.77 453.73 Z"/></clipPath></defs><g clip-path="url(#sh3)"><path d="M554.77 453.73 C554.42 451.09 555.12 448.92 556.17 446.69 C557.23 444.47 559.1 442.42 561.1 440.37 C563.09 438.31 562.86 438.61 568.13 434.39 C573.4 430.17 582.78 422.08 592.74 415.05 C602.71 408.02 616.18 398.64 627.9 392.19 C639.62 385.75 651.35 380.59 663.07 376.37 C674.79 372.15 686.51 368.93 698.23 366.88 C709.95 364.83 721.67 364.24 733.39 364.06 C745.11 363.89 756.83 364.53 768.55 365.82 C780.27 367.11 791.99 368.58 803.71 371.8 C815.43 375.02 828.91 380.59 838.87 385.16 C848.84 389.73 857.04 394.54 863.49 399.23 C869.93 403.91 874.92 409.19 877.55 413.29 C880.19 417.39 880.48 420.03 879.31 423.84 C878.14 427.65 875.5 431.46 870.52 436.15 C865.54 440.83 857.63 447.28 849.42 451.97 C841.22 456.66 831.84 460.47 821.29 464.28 C810.75 468.08 797.85 471.72 786.13 474.82 C774.41 477.93 762.69 480.74 750.97 482.91 C739.25 485.08 727.53 486.54 715.81 487.83 C704.09 489.12 692.37 490.18 680.65 490.65 C668.93 491.12 657.21 491.23 645.49 490.65 C633.76 490.06 620.87 488.89 610.32 487.13 C599.77 485.37 589.52 482.85 582.19 480.1 C574.87 477.34 570.36 473.53 566.37 470.6 C562.39 467.67 560.22 465.33 558.28 462.52 C556.35 459.7 555.12 456.36 554.77 453.73 Z" fill="#04fbfb"/><path d="M717.57 364.77 C720.2 362.78 724.89 363.89 733.39 364.06 C741.89 364.24 756.83 364.53 768.55 365.82 C780.27 367.11 791.99 368.58 803.71 371.8 C815.43 375.02 828.91 380.59 838.87 385.16 C848.84 389.73 857.04 394.54 863.49 399.23 C869.93 403.91 874.92 409.19 877.55 413.29 C880.19 417.39 880.48 420.03 879.31 423.84 C878.14 427.65 875.21 431.69 870.52 436.15 C865.83 440.6 856.46 449.1 851.18 450.56 C845.91 452.03 842.68 447.81 838.87 444.94 C835.07 442.07 831.84 437.26 828.33 433.33 C824.81 429.41 822.47 425.71 817.78 421.38 C813.09 417.04 806.64 411.36 800.2 407.31 C793.75 403.27 787.42 401.16 779.1 397.12 C770.78 393.07 760.52 386.57 750.27 383.05 C740.01 379.54 723.02 379.07 717.57 376.02 C712.12 372.97 714.93 366.76 717.57 364.77 Z" fill="#fdfdc6"/><path d="M851.18 450.56 C855.87 449.21 866.13 440.42 867 438.61 C867.88 436.79 861.14 440.37 856.46 439.66 C851.77 438.96 843.86 437.32 838.87 434.39 C833.89 431.46 830.08 425.3 826.57 422.08 C823.05 418.86 818.66 414.46 817.78 415.05 C816.9 415.64 818.95 421.5 821.29 425.6 C823.64 429.7 828.91 436.15 831.84 439.66 C834.77 443.18 835.65 444.88 838.87 446.69 C842.1 448.51 846.49 451.91 851.18 450.56 Z" fill="#b4f2fc"/><path d="M573.4 429.11 C575.16 427.53 583.66 421.2 592.74 415.05 C601.83 408.9 616.18 398.64 627.9 392.19 C639.62 385.75 651.35 380.59 663.07 376.37 C674.79 372.15 688.85 368.81 698.23 366.88 C707.6 364.94 716.39 364.53 719.32 364.77 C722.26 365 719.91 366.88 715.81 368.28 C711.71 369.69 701.16 370.86 694.71 373.21 C688.27 375.55 682.99 379.89 677.13 382.35 C671.27 384.81 664.82 386.33 659.55 387.97 C654.28 389.62 651.35 390.03 645.49 392.19 C639.62 394.36 632.01 397.47 624.39 400.98 C616.77 404.5 606.81 409.36 599.77 413.29 C592.74 417.22 586.59 421.91 582.19 424.54 C577.8 427.18 571.65 430.7 573.4 429.11 Z" fill="#fdfdc6"/><path d="M671.86 395.01 C672.44 396.88 675.37 401.28 678.89 401.69 C682.41 402.1 688.85 400.22 692.95 397.47 C697.06 394.71 699.69 388.97 703.5 385.16 C707.31 381.35 713.17 376.96 715.81 374.61 C718.45 372.27 720.5 370.98 719.32 371.1 C718.15 371.21 714.05 372.8 708.78 375.32 C703.5 377.84 693.25 383.7 687.68 386.22 C682.11 388.74 678.01 388.97 675.37 390.44 C672.74 391.9 671.27 393.13 671.86 395.01 Z" fill="#fdfdc6"/><path d="M724.6 365.82 C728.12 364.65 744.23 364.59 750.97 364.77 C757.71 364.94 764.45 365.94 765.04 366.88 C765.62 367.82 760.35 369.57 754.49 370.39 C748.63 371.21 734.85 372.56 729.87 371.8 C724.89 371.04 721.08 366.99 724.6 365.82 Z" fill="#ffee10"/><path d="M719.32 369.34 C720.2 368.87 731.34 370.1 736.91 370.39 C742.47 370.69 750.38 370.51 752.73 371.1 C755.07 371.68 754.49 373.56 750.97 373.91 C747.45 374.26 736.91 373.97 731.63 373.21 C726.36 372.44 718.45 369.81 719.32 369.34 Z" fill="#04fbfb"/><path d="M609.62 437.9 C609.8 432.75 609.62 425.6 615.6 420.32 C621.58 415.05 634.64 408.31 645.49 406.26 C656.33 404.21 670.68 409.77 680.65 408.02 C690.61 406.26 695.88 398.05 705.26 395.71 C714.64 393.37 728.41 393.07 736.91 393.95 C745.4 394.83 753.9 398.23 756.24 400.98 C758.59 403.74 755.37 407.43 750.97 410.48 C746.58 413.53 737.49 416.16 729.87 419.27 C722.26 422.37 712.29 425.6 705.26 429.11 C698.23 432.63 694.71 436.73 687.68 440.37 C680.65 444 671.86 448.28 663.07 450.91 C654.28 453.55 643.02 456.13 634.94 456.19 C626.85 456.25 618.76 454.31 614.54 451.27 C610.32 448.22 609.44 443.06 609.62 437.9 Z" fill="#18aef0"/><path d="M631.42 432.63 C632.3 430.23 635.52 424.84 640.21 422.08 C644.9 419.33 653.1 417.28 659.55 416.1 C666 414.93 675.26 414.35 678.89 415.05 C682.52 415.75 682.7 417.69 681.35 420.32 C680 422.96 676.19 428.06 670.8 430.87 C665.41 433.68 654.98 436.26 649 437.2 C643.02 438.14 637.87 437.26 634.94 436.5 C632.01 435.74 630.54 435.03 631.42 432.63 Z" fill="#0404e0"/><ellipse cx="779.29" cy="374.71" rx="27" ry="7.5" fill="#ffee10" transform="rotate(6 776.29 373.21)"/><ellipse cx="775.29" cy="372.71" rx="18" ry="5" fill="#ffa818" transform="rotate(6 776.29 373.21)"/><path d="M761.52 368.28 C763.69 367.46 770.02 366.53 773.83 366.88 C777.63 367.23 783.5 369.1 784.37 370.39 C785.25 371.68 781.74 373.79 779.1 374.61 C776.46 375.43 771.6 375.79 768.55 375.32 C765.5 374.85 761.99 372.97 760.82 371.8 C759.64 370.63 759.35 369.1 761.52 368.28 Z" fill="#7c0404"/><ellipse cx="747.45" cy="364.06" rx="6" ry="1.2" fill="#0404c0"/></g></svg>
<svg style="left:36px;top:256px" width="28" height="28" viewBox="523 484.7 28 28"><path d="M527.5 491 L527.5 510 L546 510 M527.5 510 L535 503" stroke="#222" stroke-width="1" fill="none"/></svg>
<span class="t" style="left:38.5px;top:253.9px;font-size:8.5px;line-height:10.2px;color:#222;transform:scaleX(0.870);">z</span>
<span class="t" style="left:46px;top:265.4px;font-size:8.5px;line-height:10.2px;color:#222;transform:scaleX(0.870);">y</span>
<span class="t" style="left:59px;top:273.4px;font-size:8.5px;line-height:10.2px;color:#222;transform:scaleX(0.870);">x</span>
<div class="inp" style="left:450.5px;top:52px;width:8.5px;height:9px;"></div>
<div style="left:461.5px;top:50.5px;width:35.5px;height:12.5px;border:1px dotted #444;"></div>
<span class="t" style="left:463.5px;top:51.22px;font-size:8.8px;line-height:10.56px;color:#000;transform:scaleX(0.815);">Все виды</span>
<div class="grp" style="left:450.5px;top:71px;width:48.5px;height:163px;"></div>
<div style="left:454px;top:66px;width:39px;height:10px;background:var(--pg);"></div>
<span class="t" style="left:456px;top:65.72px;font-size:8.8px;line-height:10.56px;color:#1a1a1a;transform:scaleX(0.874);">Оболочка</span>
<div class="btn" style="left:452.5px;top:81.5px;width:45px;height:12.5px;"></div>
<span class="t" style="left:471.39px;top:82.77px;font-size:8.8px;line-height:10.56px;color:#000;transform:scaleX(0.870);">W</span>
<div class="btn" style="left:452.5px;top:107px;width:45px;height:13px;"></div>
<span class="t" style="left:470.54px;top:108.52px;font-size:8.8px;line-height:10.56px;color:#000;transform:scaleX(0.870);">Mr</span>
<div class="btn" style="left:452.5px;top:127px;width:45px;height:13px;"></div>
<span class="t" style="left:470.75px;top:128.52px;font-size:8.8px;line-height:10.56px;color:#000;transform:scaleX(0.870);">Mt</span>
<div class="btn" style="left:452.5px;top:147.5px;width:45px;height:12.5px;"></div>
<span class="t" style="left:469.47px;top:148.77px;font-size:8.8px;line-height:10.56px;color:#000;transform:scaleX(0.870);">Mrt</span>
<div class="btn" style="left:452.5px;top:172px;width:45px;height:13.5px;"></div>
<span class="t" style="left:470.96px;top:173.77px;font-size:8.8px;line-height:10.56px;color:#000;transform:scaleX(0.870);">Nr</span>
<div class="btn" style="left:452.5px;top:193.5px;width:45px;height:13.5px;"></div>
<span class="t" style="left:471.17px;top:195.27px;font-size:8.8px;line-height:10.56px;color:#000;transform:scaleX(0.870);">Nt</span>
<div class="btnp" style="left:452.5px;top:216px;width:45px;height:12.7px;"></div>
<span class="t" style="left:470.47px;top:218.07px;font-size:8.8px;line-height:10.56px;color:#000;transform:scaleX(0.870);">Trt</span>
<div class="grp" style="left:450.5px;top:242px;width:48.5px;height:64px;"></div>
<div style="left:454px;top:237px;width:28px;height:10px;background:var(--pg);"></div>
<span class="t" style="left:456px;top:236.72px;font-size:8.8px;line-height:10.56px;color:#1a1a1a;transform:scaleX(0.851);">Контур</span>
<div class="btn" style="left:452.5px;top:248px;width:45px;height:12.7px;"></div>
<span class="t" style="left:472.24px;top:249.37px;font-size:8.8px;line-height:10.56px;color:#000;transform:scaleX(0.870);">N</span>
<div class="btn" style="left:452.5px;top:268.5px;width:45px;height:13px;"></div>
<span class="t" style="left:471.81px;top:270.02px;font-size:8.8px;line-height:10.56px;color:#000;transform:scaleX(0.870);">M</span>
<div class="btn" style="left:452.5px;top:289px;width:45px;height:14px;"></div>
<span class="t" style="left:472.02px;top:291.02px;font-size:8.8px;line-height:10.56px;color:#000;transform:scaleX(0.870);">Q</span>
<span class="t" style="left:25px;top:310.72px;font-size:8.8px;line-height:10.56px;color:#000;transform:scaleX(0.866);">Перемещения и напряжения</span>
<div class="btn" style="left:169.5px;top:311.5px;width:43.5px;height:11px;"></div>
<span class="t" style="left:176.63px;top:312.02px;font-size:8.8px;line-height:10.56px;color:#000;transform:scaleX(0.870);">Удалить</span>
<div class="btn" style="left:223px;top:311.5px;width:44px;height:11px;"></div>
<span class="t" style="left:228.34px;top:312.02px;font-size:8.8px;line-height:10.56px;color:#000;transform:scaleX(0.870);">Очистить</span>
<span class="t" style="left:346.5px;top:310.72px;font-size:8.8px;line-height:10.56px;color:#000;transform:scaleX(0.872);">X(м)</span>
<div class="inp" style="left:363.7px;top:310px;width:26.6px;height:12.5px;"></div>
<span class="t" style="left:365.7px;top:310.67px;font-size:8.8px;line-height:10.56px;color:#222;transform:scaleX(0.870);">0</span>
<span class="t" style="left:396px;top:310.72px;font-size:8.8px;line-height:10.56px;color:#000;transform:scaleX(0.900);">Y(м)</span>
<div class="inp" style="left:414.6px;top:310px;width:27.4px;height:12.5px;"></div>
<span class="t" style="left:416.6px;top:310.67px;font-size:8.8px;line-height:10.56px;color:#222;transform:scaleX(0.870);">0</span>
<div class="btn" style="left:452px;top:310.8px;width:44px;height:11.7px;"></div>
<span class="t" style="left:457.77px;top:311.67px;font-size:8.8px;line-height:10.56px;color:#000;transform:scaleX(0.870);">Вставить</span>
<div class="cv" style="left:22.7px;top:329px;width:389.9px;height:88.6px;overflow:hidden;"></div>
<div style="left:23.7px;top:330px;width:27.1px;height:10.5px;background:var(--bg);border:1px solid;border-color:#fff #b0ad9c #b0ad9c #fff;"></div>
<span class="t" style="left:26.7px;top:330.27px;font-size:8.3px;line-height:9.96px;color:#000;transform:scaleX(0.870);">№ ...</span>
<div style="left:50.8px;top:330px;width:31.2px;height:10.5px;background:var(--bg);border:1px solid;border-color:#fff #b0ad9c #b0ad9c #fff;"></div>
<span class="t" style="left:64.59px;top:330.27px;font-size:8.3px;line-height:9.96px;color:#000;transform:scaleX(0.870);">x</span>
<div style="left:82px;top:330px;width:31px;height:10.5px;background:var(--bg);border:1px solid;border-color:#fff #b0ad9c #b0ad9c #fff;"></div>
<span class="t" style="left:95.69px;top:330.27px;font-size:8.3px;line-height:9.96px;color:#000;transform:scaleX(0.870);">y</span>
<div style="left:113px;top:330px;width:31.5px;height:10.5px;background:var(--bg);border:1px solid;border-color:#fff #b0ad9c #b0ad9c #fff;"></div>
<span class="t" style="left:126.94px;top:330.27px;font-size:8.3px;line-height:9.96px;color:#000;transform:scaleX(0.870);">z</span>
<div style="left:144.5px;top:330px;width:36px;height:10.5px;background:var(--bg);border:1px solid;border-color:#fff #b0ad9c #b0ad9c #fff;"></div>
<span class="t" style="left:159.09px;top:330.27px;font-size:8.3px;line-height:9.96px;color:#000;transform:scaleX(0.870);">W</span>
<div style="left:180.5px;top:330px;width:35.9px;height:10.5px;background:var(--bg);border:1px solid;border-color:#fff #b0ad9c #b0ad9c #fff;"></div>
<span class="t" style="left:194.24px;top:330.27px;font-size:8.3px;line-height:9.96px;color:#000;transform:scaleX(0.870);">Mr</span>
<div style="left:216.4px;top:330px;width:36px;height:10.5px;background:var(--bg);border:1px solid;border-color:#fff #b0ad9c #b0ad9c #fff;"></div>
<span class="t" style="left:230.39px;top:330.27px;font-size:8.3px;line-height:9.96px;color:#000;transform:scaleX(0.870);">Mt</span>
<div style="left:252.4px;top:330px;width:36.2px;height:10.5px;background:var(--bg);border:1px solid;border-color:#fff #b0ad9c #b0ad9c #fff;"></div>
<span class="t" style="left:265.29px;top:330.27px;font-size:8.3px;line-height:9.96px;color:#000;transform:scaleX(0.870);">Mrt</span>
<div style="left:288.6px;top:330px;width:36px;height:10.5px;background:var(--bg);border:1px solid;border-color:#fff #b0ad9c #b0ad9c #fff;"></div>
<span class="t" style="left:302.79px;top:330.27px;font-size:8.3px;line-height:9.96px;color:#000;transform:scaleX(0.870);">Nr</span>
<div style="left:324.6px;top:330px;width:36.4px;height:10.5px;background:var(--bg);border:1px solid;border-color:#fff #b0ad9c #b0ad9c #fff;"></div>
<span class="t" style="left:339.19px;top:330.27px;font-size:8.3px;line-height:9.96px;color:#000;transform:scaleX(0.870);">Nt</span>
<div style="left:361px;top:330px;width:39px;height:10.5px;background:var(--bg);border:1px solid;border-color:#fff #b0ad9c #b0ad9c #fff;"></div>
<span class="t" style="left:376.22px;top:330.27px;font-size:8.3px;line-height:9.96px;color:#000;transform:scaleX(0.870);">Trt</span>
<div style="left:23.7px;top:340.5px;width:376.3px;height:1.4px;background:#fff;"></div>
<div style="left:23.7px;top:341.9px;width:376.3px;height:74.7px;background:#00ffff;"></div>
<div style="left:50.3px;top:341.9px;width:1px;height:74.7px;background:#a8ffff;"></div>
<div style="left:81.5px;top:341.9px;width:1px;height:74.7px;background:#a8ffff;"></div>
<div style="left:112.5px;top:341.9px;width:1px;height:74.7px;background:#a8ffff;"></div>
<div style="left:144px;top:341.9px;width:1px;height:74.7px;background:#a8ffff;"></div>
<div style="left:180px;top:341.9px;width:1px;height:74.7px;background:#a8ffff;"></div>
<div style="left:215.9px;top:341.9px;width:1px;height:74.7px;background:#a8ffff;"></div>
<div style="left:251.9px;top:341.9px;width:1px;height:74.7px;background:#a8ffff;"></div>
<div style="left:288.1px;top:341.9px;width:1px;height:74.7px;background:#a8ffff;"></div>
<div style="left:324.1px;top:341.9px;width:1px;height:74.7px;background:#a8ffff;"></div>
<div style="left:360.5px;top:341.9px;width:1px;height:74.7px;background:#a8ffff;"></div>
<div style="left:23.7px;top:351.3px;width:376.3px;height:0.8px;background:#90ffff;"></div>
<div style="left:23.7px;top:361.1px;width:376.3px;height:0.8px;background:#90ffff;"></div>
<div style="left:23.7px;top:370.9px;width:376.3px;height:0.8px;background:#90ffff;"></div>
<div style="left:23.7px;top:380.7px;width:376.3px;height:0.8px;background:#90ffff;"></div>
<div style="left:23.7px;top:390.5px;width:376.3px;height:0.8px;background:#90ffff;"></div>
<div style="left:23.7px;top:400.3px;width:376.3px;height:0.8px;background:#90ffff;"></div>
<div style="left:23.7px;top:410.1px;width:376.3px;height:0.8px;background:#90ffff;"></div>
<span class="t" style="left:25.7px;top:342.12px;font-size:8.8px;line-height:10.56px;color:#123;transform:scaleX(0.870);">1</span>
<span class="t" style="left:64.27px;top:342.12px;font-size:8.8px;line-height:10.56px;color:#123;transform:scaleX(0.870);">5</span>
<span class="t" style="left:95.37px;top:342.12px;font-size:8.8px;line-height:10.56px;color:#123;transform:scaleX(0.870);">0</span>
<span class="t" style="left:126.62px;top:342.12px;font-size:8.8px;line-height:10.56px;color:#123;transform:scaleX(0.870);">0</span>
<span class="t" style="left:160.37px;top:342.12px;font-size:8.8px;line-height:10.56px;color:#123;transform:scaleX(0.870);">0</span>
<span class="t" style="left:185.47px;top:342.12px;font-size:8.8px;line-height:10.56px;color:#123;transform:scaleX(0.870);">-0.0122</span>
<span class="t" style="left:220.36px;top:342.12px;font-size:8.8px;line-height:10.56px;color:#123;transform:scaleX(0.870);">-0.002...</span>
<span class="t" style="left:257.73px;top:342.12px;font-size:8.8px;line-height:10.56px;color:#123;transform:scaleX(0.870);">0.000...</span>
<span class="t" style="left:298.94px;top:342.12px;font-size:8.8px;line-height:10.56px;color:#123;transform:scaleX(0.870);">-226</span>
<span class="t" style="left:334.07px;top:342.12px;font-size:8.8px;line-height:10.56px;color:#123;transform:scaleX(0.870);">-45.2</span>
<span class="t" style="left:373.05px;top:342.12px;font-size:8.8px;line-height:10.56px;color:#123;transform:scaleX(0.870);">2.56</span>
<span class="t" style="left:25.7px;top:351.92px;font-size:8.8px;line-height:10.56px;color:#123;transform:scaleX(0.870);">2</span>
<span class="t" style="left:58.95px;top:351.92px;font-size:8.8px;line-height:10.56px;color:#123;transform:scaleX(0.870);">4.92</span>
<span class="t" style="left:87.92px;top:351.92px;font-size:8.8px;line-height:10.56px;color:#123;transform:scaleX(0.870);">0.868</span>
<span class="t" style="left:126.62px;top:351.92px;font-size:8.8px;line-height:10.56px;color:#123;transform:scaleX(0.870);">0</span>
<span class="t" style="left:160.37px;top:351.92px;font-size:8.8px;line-height:10.56px;color:#123;transform:scaleX(0.870);">0</span>
<span class="t" style="left:185.47px;top:351.92px;font-size:8.8px;line-height:10.56px;color:#123;transform:scaleX(0.870);">-0.0103</span>
<span class="t" style="left:220.36px;top:351.92px;font-size:8.8px;line-height:10.56px;color:#123;transform:scaleX(0.870);">-0.001...</span>
<span class="t" style="left:256.46px;top:351.92px;font-size:8.8px;line-height:10.56px;color:#123;transform:scaleX(0.870);">-0.000...</span>
<span class="t" style="left:298.94px;top:351.92px;font-size:8.8px;line-height:10.56px;color:#123;transform:scaleX(0.870);">-235</span>
<span class="t" style="left:334.07px;top:351.92px;font-size:8.8px;line-height:10.56px;color:#123;transform:scaleX(0.870);">-57.2</span>
<span class="t" style="left:373.05px;top:351.92px;font-size:8.8px;line-height:10.56px;color:#123;transform:scaleX(0.870);">17.1</span>
<span class="t" style="left:25.7px;top:361.72px;font-size:8.8px;line-height:10.56px;color:#123;transform:scaleX(0.870);">3</span>
<span class="t" style="left:61.08px;top:361.72px;font-size:8.8px;line-height:10.56px;color:#123;transform:scaleX(0.870);">4.7</span>
<span class="t" style="left:90.05px;top:361.72px;font-size:8.8px;line-height:10.56px;color:#123;transform:scaleX(0.870);">1.71</span>
<span class="t" style="left:126.62px;top:361.72px;font-size:8.8px;line-height:10.56px;color:#123;transform:scaleX(0.870);">0</span>
<span class="t" style="left:160.37px;top:361.72px;font-size:8.8px;line-height:10.56px;color:#123;transform:scaleX(0.870);">0</span>
<span class="t" style="left:187.6px;top:361.72px;font-size:8.8px;line-height:10.56px;color:#123;transform:scaleX(0.870);">-0.012</span>
<span class="t" style="left:220.36px;top:361.72px;font-size:8.8px;line-height:10.56px;color:#123;transform:scaleX(0.870);">-0.002...</span>
<span class="t" style="left:257.73px;top:361.72px;font-size:8.8px;line-height:10.56px;color:#123;transform:scaleX(0.870);">0.000...</span>
<span class="t" style="left:298.94px;top:361.72px;font-size:8.8px;line-height:10.56px;color:#123;transform:scaleX(0.870);">-227</span>
<span class="t" style="left:334.07px;top:361.72px;font-size:8.8px;line-height:10.56px;color:#123;transform:scaleX(0.870);">-45.7</span>
<span class="t" style="left:373.05px;top:361.72px;font-size:8.8px;line-height:10.56px;color:#123;transform:scaleX(0.870);">7.79</span>
<span class="t" style="left:25.7px;top:371.52px;font-size:8.8px;line-height:10.56px;color:#123;transform:scaleX(0.870);">4</span>
<span class="t" style="left:58.95px;top:371.52px;font-size:8.8px;line-height:10.56px;color:#123;transform:scaleX(0.870);">4.33</span>
<span class="t" style="left:92.18px;top:371.52px;font-size:8.8px;line-height:10.56px;color:#123;transform:scaleX(0.870);">2.5</span>
<span class="t" style="left:126.62px;top:371.52px;font-size:8.8px;line-height:10.56px;color:#123;transform:scaleX(0.870);">0</span>
<span class="t" style="left:160.37px;top:371.52px;font-size:8.8px;line-height:10.56px;color:#123;transform:scaleX(0.870);">0</span>
<span class="t" style="left:189.72px;top:371.52px;font-size:8.8px;line-height:10.56px;color:#123;transform:scaleX(0.870);">-0.01</span>
<span class="t" style="left:220.36px;top:371.52px;font-size:8.8px;line-height:10.56px;color:#123;transform:scaleX(0.870);">-0.001...</span>
<span class="t" style="left:256.46px;top:371.52px;font-size:8.8px;line-height:10.56px;color:#123;transform:scaleX(0.870);">-0.000...</span>
<span class="t" style="left:298.94px;top:371.52px;font-size:8.8px;line-height:10.56px;color:#123;transform:scaleX(0.870);">-240</span>
<span class="t" style="left:334.07px;top:371.52px;font-size:8.8px;line-height:10.56px;color:#123;transform:scaleX(0.870);">-57.3</span>
<span class="t" style="left:373.05px;top:371.52px;font-size:8.8px;line-height:10.56px;color:#123;transform:scaleX(0.870);">21.3</span>
<span class="t" style="left:25.7px;top:381.32px;font-size:8.8px;line-height:10.56px;color:#123;transform:scaleX(0.870);">5</span>
<span class="t" style="left:58.95px;top:381.32px;font-size:8.8px;line-height:10.56px;color:#123;transform:scaleX(0.870);">3.83</span>
<span class="t" style="left:90.05px;top:381.32px;font-size:8.8px;line-height:10.56px;color:#123;transform:scaleX(0.870);">3.21</span>
<span class="t" style="left:126.62px;top:381.32px;font-size:8.8px;line-height:10.56px;color:#123;transform:scaleX(0.870);">0</span>
<span class="t" style="left:160.37px;top:381.32px;font-size:8.8px;line-height:10.56px;color:#123;transform:scaleX(0.870);">0</span>
<span class="t" style="left:185.75px;top:381.32px;font-size:8.8px;line-height:10.56px;color:#123;transform:scaleX(0.870);">-0.0118</span>
<span class="t" style="left:221.42px;top:381.32px;font-size:8.8px;line-height:10.56px;color:#123;transform:scaleX(0.870);">-0.0023</span>
<span class="t" style="left:257.73px;top:381.32px;font-size:8.8px;line-height:10.56px;color:#123;transform:scaleX(0.870);">0.000...</span>
<span class="t" style="left:298.94px;top:381.32px;font-size:8.8px;line-height:10.56px;color:#123;transform:scaleX(0.870);">-230</span>
<span class="t" style="left:334.07px;top:381.32px;font-size:8.8px;line-height:10.56px;color:#123;transform:scaleX(0.870);">-46.6</span>
<span class="t" style="left:373.05px;top:381.32px;font-size:8.8px;line-height:10.56px;color:#123;transform:scaleX(0.870);">12.5</span>
<span class="t" style="left:25.7px;top:391.12px;font-size:8.8px;line-height:10.56px;color:#123;transform:scaleX(0.870);">6</span>
<span class="t" style="left:58.95px;top:391.12px;font-size:8.8px;line-height:10.56px;color:#123;transform:scaleX(0.870);">3.21</span>
<span class="t" style="left:90.05px;top:391.12px;font-size:8.8px;line-height:10.56px;color:#123;transform:scaleX(0.870);">3.83</span>
<span class="t" style="left:126.62px;top:391.12px;font-size:8.8px;line-height:10.56px;color:#123;transform:scaleX(0.870);">0</span>
<span class="t" style="left:160.37px;top:391.12px;font-size:8.8px;line-height:10.56px;color:#123;transform:scaleX(0.870);">0</span>
<span class="t" style="left:185.47px;top:391.12px;font-size:8.8px;line-height:10.56px;color:#123;transform:scaleX(0.870);">-0.0097</span>
<span class="t" style="left:221.42px;top:391.12px;font-size:8.8px;line-height:10.56px;color:#123;transform:scaleX(0.870);">-0.0018</span>
<span class="t" style="left:256.46px;top:391.12px;font-size:8.8px;line-height:10.56px;color:#123;transform:scaleX(0.870);">-0.000...</span>
<span class="t" style="left:298.94px;top:391.12px;font-size:8.8px;line-height:10.56px;color:#123;transform:scaleX(0.870);">-246</span>
<span class="t" style="left:334.07px;top:391.12px;font-size:8.8px;line-height:10.56px;color:#123;transform:scaleX(0.870);">-57.4</span>
<span class="t" style="left:373.05px;top:391.12px;font-size:8.8px;line-height:10.56px;color:#123;transform:scaleX(0.870);">24.3</span>
<span class="t" style="left:25.7px;top:400.92px;font-size:8.8px;line-height:10.56px;color:#123;transform:scaleX(0.870);">7</span>
<span class="t" style="left:61.08px;top:400.92px;font-size:8.8px;line-height:10.56px;color:#123;transform:scaleX(0.870);">2.5</span>
<span class="t" style="left:90.05px;top:400.92px;font-size:8.8px;line-height:10.56px;color:#123;transform:scaleX(0.870);">4.33</span>
<span class="t" style="left:126.62px;top:400.92px;font-size:8.8px;line-height:10.56px;color:#123;transform:scaleX(0.870);">0</span>
<span class="t" style="left:160.37px;top:400.92px;font-size:8.8px;line-height:10.56px;color:#123;transform:scaleX(0.870);">0</span>
<span class="t" style="left:185.75px;top:400.92px;font-size:8.8px;line-height:10.56px;color:#123;transform:scaleX(0.870);">-0.0114</span>
<span class="t" style="left:220.36px;top:400.92px;font-size:8.8px;line-height:10.56px;color:#123;transform:scaleX(0.870);">-0.002...</span>
<span class="t" style="left:257.73px;top:400.92px;font-size:8.8px;line-height:10.56px;color:#123;transform:scaleX(0.870);">0.000...</span>
<span class="t" style="left:298.94px;top:400.92px;font-size:8.8px;line-height:10.56px;color:#123;transform:scaleX(0.870);">-234</span>
<span class="t" style="left:334.07px;top:400.92px;font-size:8.8px;line-height:10.56px;color:#123;transform:scaleX(0.870);">-47.8</span>
<span class="t" style="left:373.05px;top:400.92px;font-size:8.8px;line-height:10.56px;color:#123;transform:scaleX(0.870);">16.7</span>
<span class="t" style="left:25.7px;top:410.72px;font-size:8.8px;line-height:10.56px;color:#123;transform:scaleX(0.870);clip-path:inset(-2px -2px 4.68px -2px);">8</span>
<span class="t" style="left:58.95px;top:410.72px;font-size:8.8px;line-height:10.56px;color:#123;transform:scaleX(0.870);clip-path:inset(-2px -2px 4.68px -2px);">1.71</span>
<span class="t" style="left:92.18px;top:410.72px;font-size:8.8px;line-height:10.56px;color:#123;transform:scaleX(0.870);clip-path:inset(-2px -2px 4.68px -2px);">4.7</span>
<span class="t" style="left:126.62px;top:410.72px;font-size:8.8px;line-height:10.56px;color:#123;transform:scaleX(0.870);clip-path:inset(-2px -2px 4.68px -2px);">0</span>
<span class="t" style="left:160.37px;top:410.72px;font-size:8.8px;line-height:10.56px;color:#123;transform:scaleX(0.870);clip-path:inset(-2px -2px 4.68px -2px);">0</span>
<span class="t" style="left:187.6px;top:410.72px;font-size:8.8px;line-height:10.56px;color:#123;transform:scaleX(0.870);clip-path:inset(-2px -2px 4.68px -2px);">-0.009</span>
<span class="t" style="left:223.55px;top:410.72px;font-size:8.8px;line-height:10.56px;color:#123;transform:scaleX(0.870);clip-path:inset(-2px -2px 4.68px -2px);">-0.001</span>
<span class="t" style="left:259.65px;top:410.72px;font-size:8.8px;line-height:10.56px;color:#123;transform:scaleX(0.870);clip-path:inset(-2px -2px 4.68px -2px);">-0.000</span>
<span class="t" style="left:298.94px;top:410.72px;font-size:8.8px;line-height:10.56px;color:#123;transform:scaleX(0.870);clip-path:inset(-2px -2px 4.68px -2px);">-252</span>
<span class="t" style="left:334.07px;top:410.72px;font-size:8.8px;line-height:10.56px;color:#123;transform:scaleX(0.870);clip-path:inset(-2px -2px 4.68px -2px);">-57.5</span>
<span class="t" style="left:373.05px;top:410.72px;font-size:8.8px;line-height:10.56px;color:#123;transform:scaleX(0.870);clip-path:inset(-2px -2px 4.68px -2px);">26.1</span>
<div style="left:401px;top:330px;width:10.6px;height:86.6px;background:#f4f3ee;"></div>
<div style="left:401px;top:330px;width:10.6px;height:10.6px;background:#c3d3fb;border:1px solid #e8eefe;border-radius:2px;"></div>
<svg style="left:401px;top:330px" width="10.6" height="10.6" viewBox="0 0 10 10"><path d="M2.5 6 L5 3.5 L7.5 6" stroke="#4d6185" stroke-width="1.6" fill="none"/></svg>
<div style="left:401px;top:406px;width:10.6px;height:10.6px;background:#c3d3fb;border:1px solid #e8eefe;border-radius:2px;"></div>
<svg style="left:401px;top:406px" width="10.6" height="10.6" viewBox="0 0 10 10"><path d="M2.5 4 L5 6.5 L7.5 4" stroke="#4d6185" stroke-width="1.6" fill="none"/></svg>
<div style="left:401px;top:341.1px;width:10.6px;height:4.5px;background:#c3d3fb;border:1px solid #e8eefe;border-radius:1px;"></div>
<span class="t" style="left:451px;top:326.72px;font-size:8.8px;line-height:10.56px;color:#000;transform:scaleX(0.857);">Моменты</span>
<div class="inp" style="left:451px;top:341px;width:42px;height:12px;"></div>
<span class="t" style="left:454px;top:342.02px;font-size:8.8px;line-height:10.56px;color:#222;transform:scaleX(0.870);">тм/м</span>
<div style="left:482.5px;top:342.5px;width:9px;height:9px;background:#e4e1d2;border:1px solid;border-color:#fff #6f6d62 #6f6d62 #fff;"></div>
<svg style="left:483px;top:344.4px" width="8" height="6" viewBox="0 0 8 6"><path d="M1.2 1.3 L6.8 1.3 L4 4.6 Z" fill="#111"/></svg>
<span class="t" style="left:451px;top:366.72px;font-size:8.8px;line-height:10.56px;color:#000;transform:scaleX(0.864);">Напряжения</span>
<div class="inp" style="left:451px;top:379px;width:42px;height:12.7px;"></div>
<span class="t" style="left:454px;top:380.37px;font-size:8.8px;line-height:10.56px;color:#222;transform:scaleX(0.870);">т/м2</span>
<div style="left:481.8px;top:380.5px;width:9.7px;height:9.7px;background:#e4e1d2;border:1px solid;border-color:#fff #6f6d62 #6f6d62 #fff;"></div>
<svg style="left:482.65px;top:382.75px" width="8" height="6" viewBox="0 0 8 6"><path d="M1.2 1.3 L6.8 1.3 L4 4.6 Z" fill="#111"/></svg>
<div style="left:21.75px;top:423px;width:246.85px;height:12.6px;background:#f3f1e8;border:1px solid;border-color:#6f6d62 #fff #fff #6f6d62;"></div>
<div class="btn" style="left:435.5px;top:424.4px;width:61px;height:13px;"></div>
<span class="t" style="left:455.52px;top:425.92px;font-size:8.8px;line-height:10.56px;color:#000;transform:scaleX(0.870);">Отчет</span>
<div class="btn" style="left:400px;top:452.7px;width:51.3px;height:13.8px;"></div>
<span class="t" style="left:414.2px;top:454.62px;font-size:8.8px;line-height:10.56px;color:#000;transform:scaleX(0.870);">Выход</span>
<div class="btn" style="left:456.8px;top:452.7px;width:49.9px;height:13.8px;"></div>
<span class="t" style="left:466.73px;top:454.62px;font-size:8.8px;line-height:10.56px;color:#000;transform:scaleX(0.870);">Справка</span>
</div>
<div class="win" style="left:467px;top:696.5px;width:557px;height:70.5px;background:#e3eecb;border-top:2px solid #7b9956;border-left:2px solid #7b9956;border-radius:4px 0 0 0;">
<div style="left:0.5px;top:3.5px;width:20px;height:22.5px;background:radial-gradient(closest-side,#fbfdf6 55%,rgba(240,246,228,0.3) 100%);"></div>
<span class="t" style="left:35px;top:8.86px;font-size:16.4px;line-height:19.68px;color:#151515;font-weight:bold;transform:scaleX(1.022);">Оболочка на круглом плане</span>
<span class="t" style="left:35px;top:32.1px;font-size:14px;line-height:16.8px;color:#333;transform:scaleX(0.991);">Программа предназначена для статического расчета оболочек с возможностью</span>
<span class="t" style="left:35px;top:48.1px;font-size:14px;line-height:16.8px;color:#333;transform:scaleX(1.016);">задания различных типов нагрузок и способов опирания по круглому контуру.</span>
<svg style="left:1px;top:6px" width="20" height="20" viewBox="470 705 20 20"><path d="M473.3 715.5 C473.3 711 477 709.3 480.5 709.3 C484 709.3 487.8 711 487.8 715.5 C485 720.5 476 720.5 473.3 715.5 Z" fill="#fff" stroke="#222" stroke-width="1.2"/><path d="M472.2 707.2 L478.2 713.8" stroke="#c82030" stroke-width="1.2"/></svg>
</div>
</body></html>
